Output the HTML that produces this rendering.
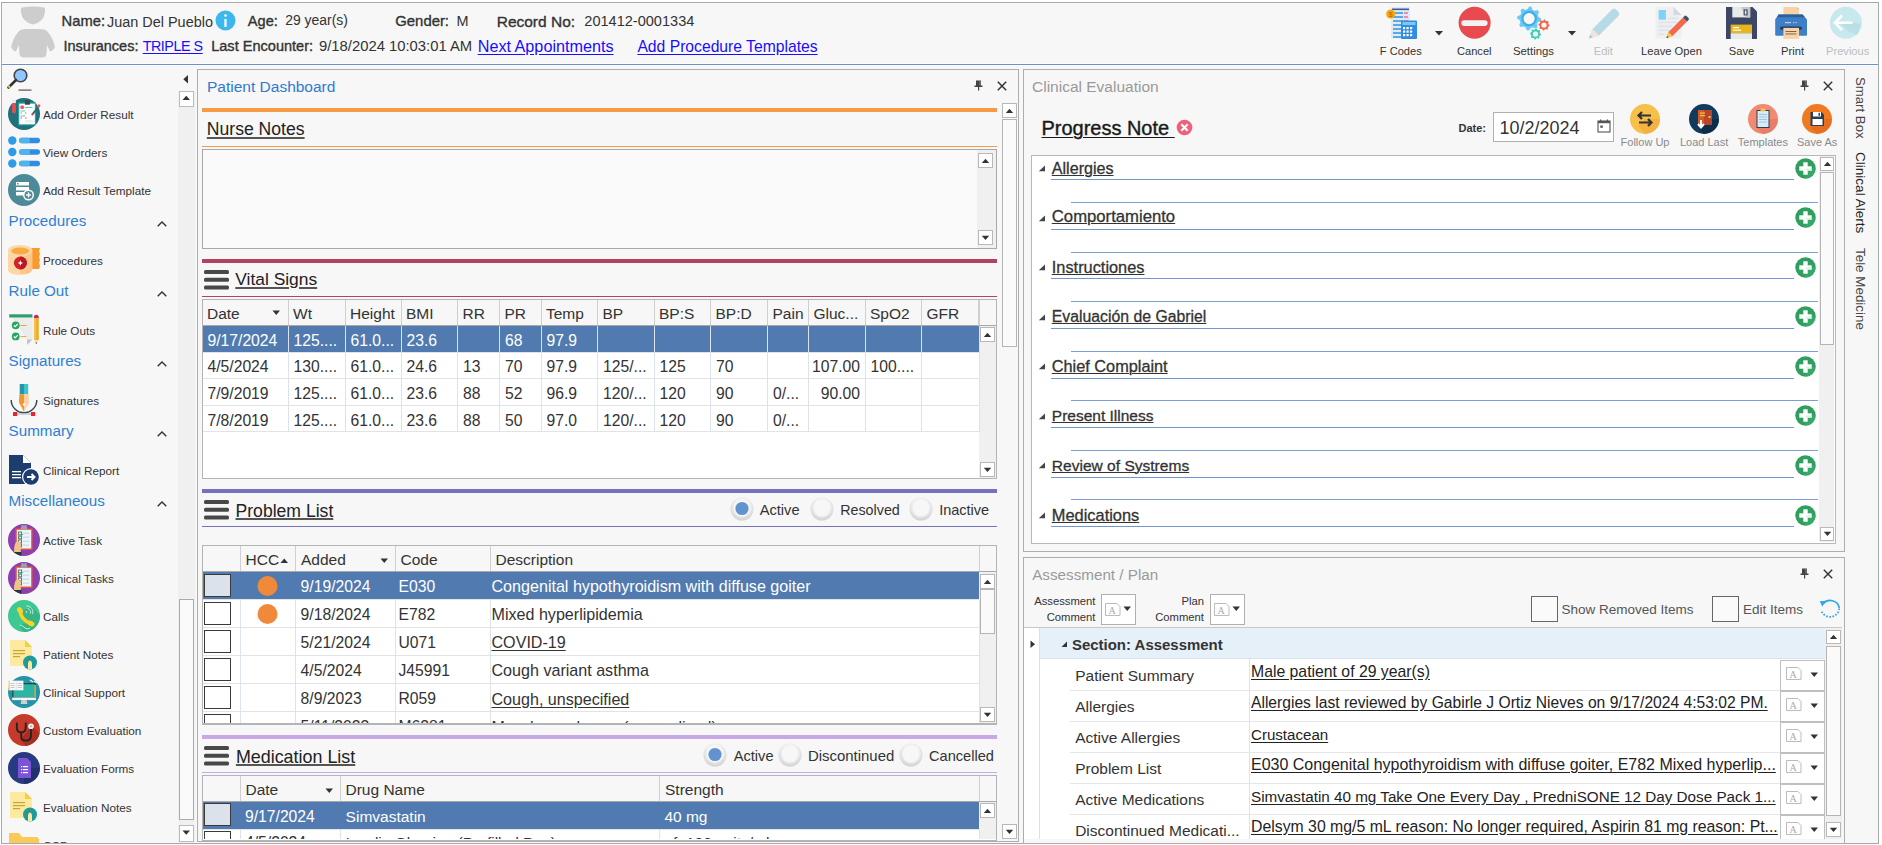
<!DOCTYPE html>
<html><head><meta charset="utf-8"><style>
html,body{margin:0;padding:0;}
body{width:1882px;height:845px;position:relative;overflow:hidden;background:#fff;font-family:"Liberation Sans",sans-serif;}
.t{position:absolute;white-space:nowrap;line-height:1;}
.a{position:absolute;box-sizing:content-box;}
svg.a{overflow:visible;}
</style></head><body>
<div class="a" style="left:1px;top:2px;width:1876px;height:840px;border:1px solid #a9a9a9;background:#f7f7f7"></div>
<div class="a" style="left:2px;top:63px;width:1876px;height:1px;background:#fdfdfd"></div>
<div class="a" style="left:2px;top:64px;width:1876px;height:1px;background:#6b93c8"></div>
<div class="a" style="left:2px;top:65px;width:1876px;height:1px;background:#fdfdfd"></div>
<svg class="a" style="left:8px;top:5px" width="50" height="54" viewBox="0 0 50 54">
<path d="M14 2.5 Q25 0.5 36 2.5 Q37.5 3 37 7 Q36 17 25 19.5 Q14 17 13 7 Q12.5 3 14 2.5Z" fill="#cdcdcd"/>
<path d="M3.2 42 Q5 33 11 26 Q13 24 18 24 L32 24 Q37 24 39 26 Q45 33 47 42 Q45 46 42 46.5 L39 40 L38.5 49 Q38 52.5 34 52.5 L16 52.5 Q12 52.5 11.5 49 L11 40 L8 46.5 Q5 46 3.2 42Z" fill="#cdcdcd"/>
</svg>
<div class="t " style="left:61.6px;top:14.32px;font-size:14.74px;color:#333;-webkit-text-stroke:0.35px #333;">Name:</div>
<div class="t " style="left:107px;top:14.57px;font-size:14.45px;color:#333;">Juan Del Pueblo</div>
<svg class="a" style="left:215px;top:10px" width="21" height="21" viewBox="0 0 21 21"><circle cx="10.5" cy="10.5" r="10" fill="#3cb8ef"/><path d="M10.5 10.5 L20.5 10.5 A10 10 0 0 1 10.5 20.5Z" fill="#33a6e0" opacity="0.0"/><rect x="9.4" y="9" width="2.2" height="8" fill="#fff"/><circle cx="10.5" cy="5.6" r="1.3" fill="#fff"/></svg>
<div class="t " style="left:247.8px;top:14.46px;font-size:14.58px;color:#333;-webkit-text-stroke:0.35px #333;">Age:</div>
<div class="t " style="left:285.2px;top:14.49px;font-size:13.95px;color:#333;">29 year(s)</div>
<div class="t " style="left:395.3px;top:14.22px;font-size:14.86px;color:#333;-webkit-text-stroke:0.35px #333;">Gender:</div>
<div class="t " style="left:456.4px;top:14.07px;font-size:14.45px;color:#333;">M</div>
<div class="t " style="left:496.7px;top:13.68px;font-size:15.5px;color:#333;-webkit-text-stroke:0.35px #333;">Record No:</div>
<div class="t " style="left:584.3px;top:13.98px;font-size:14.55px;color:#333;">201412-0001334</div>
<div class="t " style="left:63.5px;top:38.93px;font-size:14.5px;color:#333;-webkit-text-stroke:0.35px #333;">Insurances:</div>
<div class="t " style="left:142.7px;top:39.40px;font-size:14.3px;color:#1a0dff;letter-spacing:-0.45px;text-decoration:underline;text-underline-offset:2px;">TRIPLE S</div>
<div class="t " style="left:211.2px;top:38.87px;font-size:14.56px;color:#333;-webkit-text-stroke:0.35px #333;">Last Encounter:</div>
<div class="t " style="left:319px;top:38.95px;font-size:14.82px;color:#333;">9/18/2024 10:03:01 AM</div>
<div class="t " style="left:477.7px;top:38.29px;font-size:16.2px;color:#1a0dff;text-decoration:underline;text-underline-offset:2px;">Next Appointments</div>
<div class="t " style="left:637.4px;top:38.71px;font-size:15.7px;color:#1a0dff;text-decoration:underline;text-underline-offset:2px;">Add Procedure Templates</div>
<svg class="a" style="left:1385px;top:5px" width="36" height="36" viewBox="0 0 36 36">
<path d="M6 2 L25 2 L25 33.5 L6 33.5Z" fill="#dfe9f8"/>
<rect x="7" y="3.5" width="17" height="1.6" fill="#3d5a9a"/>
<g fill="#5aaae6"><rect x="8" y="7" width="10" height="2"/><rect x="8" y="11" width="10" height="2"/><rect x="8" y="15" width="10" height="2"/><rect x="8" y="19" width="8" height="2"/><rect x="8" y="23" width="8" height="2"/><rect x="8" y="27" width="8" height="2"/><rect x="8" y="31" width="8" height="2"/></g>
<g fill="#f08cb0"><rect x="19" y="7" width="4" height="2"/><rect x="19" y="11" width="4" height="2"/><rect x="19" y="15" width="4" height="2"/></g>
<rect x="16" y="15.5" width="16" height="18.5" rx="1" fill="#2f8ee0"/>
<rect x="17.5" y="17" width="13" height="3" fill="#7ec7f0"/>
<g fill="#fff"><rect x="18" y="22" width="2.2" height="2.2"/><rect x="21.5" y="22" width="2.2" height="2.2"/><rect x="25" y="22" width="2.2" height="2.2"/><rect x="18" y="25.5" width="2.2" height="2.2"/><rect x="21.5" y="25.5" width="2.2" height="2.2"/><rect x="25" y="25.5" width="2.2" height="2.2"/><rect x="18" y="29" width="2.2" height="2.2"/><rect x="21.5" y="29" width="2.2" height="2.2"/><rect x="25" y="29" width="2.2" height="2.2"/></g>
<circle cx="5.7" cy="9" r="4.6" fill="#f5a90e"/><text x="5.7" y="11.8" font-size="7" text-anchor="middle" fill="#c0580a" font-family="Liberation Sans">$</text>
</svg>
<svg class="a" style="left:1435px;top:31px" width="8" height="5.5" viewBox="0 0 8 5.5"><path d="M0 0 L8 0 L4.0 4.5Z" fill="#333"/></svg>
<div class="t" style="left:1340.8px;width:120px;text-align:center;top:45.60px;font-size:11.1px;color:#333;">F Codes</div>
<svg class="a" style="left:1458px;top:6px" width="34" height="34" viewBox="0 0 34 34"><circle cx="16.6" cy="16.8" r="16" fill="#e84a4f"/><rect x="3.3" y="14.2" width="26.3" height="5.7" rx="2.8" fill="#f2f2f2"/></svg>
<div class="t" style="left:1414.3px;width:120px;text-align:center;top:45.60px;font-size:11.1px;color:#333;">Cancel</div>
<svg class="a" style="left:1515px;top:5px" width="36" height="36" viewBox="0 0 36 36"><path d="M26.10 13.60 L25.87 15.94 L22.75 17.18 L21.88 18.80 L22.59 22.09 L20.77 23.58 L17.68 22.25 L15.93 22.78 L14.10 25.60 L11.76 25.37 L10.52 22.25 L8.90 21.38 L5.61 22.09 L4.12 20.27 L5.45 17.18 L4.92 15.43 L2.10 13.60 L2.33 11.26 L5.45 10.02 L6.32 8.40 L5.61 5.11 L7.43 3.62 L10.52 4.95 L12.27 4.42 L14.10 1.60 L16.44 1.83 L17.68 4.95 L19.30 5.82 L22.59 5.11 L24.08 6.93 L22.75 10.02 L23.28 11.77Z" fill="#6ccaf5"/><circle cx="14.1" cy="13.6" r="9.36" fill="#6ccaf5"/><circle cx="14.1" cy="13.6" r="7.76" fill="#40ace6"/><circle cx="14.1" cy="13.6" r="5.6" fill="#f7f7f7"/><path d="M34.60 20.00 L34.49 21.09 L33.04 21.67 L32.63 22.43 L32.96 23.96 L32.11 24.66 L30.67 24.04 L29.85 24.28 L29.00 25.60 L27.91 25.49 L27.33 24.04 L26.57 23.63 L25.04 23.96 L24.34 23.11 L24.96 21.67 L24.72 20.85 L23.40 20.00 L23.51 18.91 L24.96 18.33 L25.37 17.57 L25.04 16.04 L25.89 15.34 L27.33 15.96 L28.15 15.72 L29.00 14.40 L30.09 14.51 L30.67 15.96 L31.43 16.37 L32.96 16.04 L33.66 16.89 L33.04 18.33 L33.28 19.15Z" fill="#f0684e"/><circle cx="29" cy="20" r="4.367999999999999" fill="#f0684e"/><circle cx="29" cy="20" r="3.608" fill="#f0684e"/><circle cx="29" cy="20" r="2.6" fill="#f7f7f7"/><path d="M26.10 29.00 L25.99 30.09 L24.54 30.67 L24.13 31.43 L24.46 32.96 L23.61 33.66 L22.17 33.04 L21.35 33.28 L20.50 34.60 L19.41 34.49 L18.83 33.04 L18.07 32.63 L16.54 32.96 L15.84 32.11 L16.46 30.67 L16.22 29.85 L14.90 29.00 L15.01 27.91 L16.46 27.33 L16.87 26.57 L16.54 25.04 L17.39 24.34 L18.83 24.96 L19.65 24.72 L20.50 23.40 L21.59 23.51 L22.17 24.96 L22.93 25.37 L24.46 25.04 L25.16 25.89 L24.54 27.33 L24.78 28.15Z" fill="#3fcfb5"/><circle cx="20.5" cy="29" r="4.367999999999999" fill="#3fcfb5"/><circle cx="20.5" cy="29" r="3.608" fill="#3fcfb5"/><circle cx="20.5" cy="29" r="2.6" fill="#f7f7f7"/></svg>
<svg class="a" style="left:1568px;top:31px" width="8" height="5.5" viewBox="0 0 8 5.5"><path d="M0 0 L8 0 L4.0 4.5Z" fill="#333"/></svg>
<div class="t" style="left:1473.5px;width:120px;text-align:center;top:46.05px;font-size:11.4px;color:#333;">Settings</div>
<svg class="a" style="left:1585px;top:5px" width="36" height="36" viewBox="0 0 36 36">
<path d="M4 33.5 L7.5 24 L27 4.5 Q29 2.7 31 4.5 L33.5 7 Q35.2 9 33.5 11 L14 30.5Z" fill="#b6dbe6"/>
<path d="M7.5 24 L14 30.5 L4 33.5Z" fill="#f4e3dc"/>
<path d="M4 33.5 L5.3 29.8 L7.6 32.3Z" fill="#9bc9d6"/>
</svg>
<div class="t" style="left:1543.3px;width:120px;text-align:center;top:45.60px;font-size:11.1px;color:#bdbdbd;">Edit</div>
<svg class="a" style="left:1654px;top:5px" width="36" height="36" viewBox="0 0 36 36">
<path d="M1.5 2 L19.5 2 L27.5 10 L27.5 33.5 L1.5 33.5Z" fill="#efefef"/>
<path d="M19.5 2 L27.5 10 L19.5 10Z" fill="#d3d8e3"/>
<rect x="4.6" y="5" width="7.3" height="9.7" fill="#7dd3f7"/>
<g fill="#dde3ec"><rect x="14" y="12.5" width="10" height="1.6"/><rect x="4.5" y="16.5" width="19" height="1.6"/><rect x="4.5" y="20.5" width="14" height="1.6"/><rect x="4.5" y="24.5" width="12" height="1.6"/><rect x="4.5" y="28.5" width="6" height="1.6"/></g>
<path d="M12.5 33 L14.5 27 L29 12.5 L33 16.5 L18.5 31Z" fill="#f26a4b"/>
<path d="M29 12.5 L30.5 11 Q31.5 10 32.5 11 L34.5 13 Q35.5 14 34.5 15 L33 16.5Z" fill="#3e5266"/>
<path d="M14.5 27 L18.5 31 L12.5 33Z" fill="#f4c84e"/>
<path d="M12.5 33 L13.2 31 L14.5 32.4Z" fill="#333"/>
</svg>
<div class="t" style="left:1611.5px;width:120px;text-align:center;top:45.52px;font-size:11.2px;color:#333;">Leave Open</div>
<svg class="a" style="left:1725px;top:5px" width="34" height="36" viewBox="0 0 34 36">
<path d="M1 2 L27.5 2 L32 6.5 L32 34 L1 34Z" fill="#3d4664"/>
<rect x="7.3" y="2" width="17.9" height="10.4" fill="#e6eaea"/>
<path d="M16 2 L25.2 2 L25.2 12.4 L21 12.4Z" fill="#c5c9cc"/>
<rect x="18.6" y="4.4" width="4" height="6" fill="#3d4664"/><rect x="19.8" y="5.4" width="1.6" height="4" fill="#e6eaea"/>
<rect x="5.7" y="19.6" width="21.3" height="8.6" fill="#e8b61c"/>
<rect x="5.7" y="28.2" width="21.3" height="5.8" fill="#e6eaea"/>
<rect x="8" y="22" width="6" height="1.2" fill="#fff"/><rect x="8" y="24.6" width="8" height="1.2" fill="#fff"/>
</svg>
<div class="t" style="left:1681.5px;width:120px;text-align:center;top:45.52px;font-size:11.2px;color:#333;">Save</div>
<svg class="a" style="left:1774px;top:5px" width="36" height="36" viewBox="0 0 36 36">
<path d="M9.4 1.9 L23 1.9 L25 4 L25 13 L9.4 13Z" fill="#f9d3a5"/>
<path d="M23 1.9 L25 4 L23 4Z" fill="#e8b888"/>
<path d="M4.5 9.6 L28.5 9.6 L33 14.5 L33 29.8 Q33 30.8 32 30.8 L2.2 30.8 Q1.2 30.8 1.2 29.8 L1.2 14.5Z" fill="#3f7fc7"/>
<path d="M4.5 9.6 L28.5 9.6 L31 12.3 L3.2 12.3Z" fill="#2e5f98"/>
<rect x="11" y="17" width="6" height="1.2" fill="#b9d3ef"/><rect x="19" y="17" width="1.2" height="1.2" fill="#b9d3ef"/><rect x="21.5" y="17" width="1.2" height="1.2" fill="#b9d3ef"/>
<rect x="6" y="21.6" width="22" height="3.2" rx="1.6" fill="#2b3e55"/>
<rect x="9.4" y="22.9" width="15.6" height="11" fill="#f9d3a5"/>
<rect x="11.5" y="26" width="11" height="0.9" fill="#6b5a45"/><rect x="11.5" y="28.5" width="11" height="0.9" fill="#6b5a45"/>
</svg>
<div class="t" style="left:1732.5px;width:120px;text-align:center;top:45.52px;font-size:11.2px;color:#333;">Print</div>
<svg class="a" style="left:1829px;top:6px" width="34" height="34" viewBox="0 0 34 34">
<circle cx="16.9" cy="16.8" r="16" fill="#c7e8ec"/>
<path d="M11 16.8 L19 24.8 L28 29 L32 18 L26 16.8 Z" fill="#b5dde2" opacity="0.8"/>
<path d="M13 9.5 L6 16.8 L13 24 M6.5 16.8 L23.5 16.8" stroke="#fff" stroke-width="2.6" fill="none"/>
</svg>
<div class="t" style="left:1787.7px;width:120px;text-align:center;top:45.60px;font-size:11.1px;color:#bdbdbd;">Previous</div>
<div class="a" style="left:0;top:0;width:1882px;height:845px;clip-path:inset(66px 1686px 2px 2px)"><div class="a" style="left:178px;top:91px;width:17px;height:752px;background:#f0f0f0"></div>
<svg class="a" style="left:183px;top:75px" width="6" height="9" viewBox="0 0 6 9"><path d="M5 0 L5 8.5 L0.3 4.25Z" fill="#333"/></svg>
<div class="a" style="left:179px;top:91px;width:13px;height:14px;border:1px solid #bbb;background:#fff"></div>
<svg class="a" style="left:182px;top:95px" width="9" height="6" viewBox="0 0 9 6"><path d="M0.5 5 L8 5 L4.25 0.8Z" fill="#333"/></svg>
<div class="a" style="left:179px;top:599px;width:13px;height:219px;border:1px solid #aaa;background:#fafafa"></div>
<div class="a" style="left:179px;top:825px;width:13px;height:15px;border:1px solid #bbb;background:#fff"></div>
<svg class="a" style="left:182px;top:830px" width="9" height="6" viewBox="0 0 9 6"><path d="M0.5 0.5 L8 0.5 L4.25 4.7Z" fill="#333"/></svg>
<svg class="a" style="left:6px;top:67px" width="26" height="26" viewBox="0 0 26 26"><circle cx="14.5" cy="8.5" r="6.3" fill="#8ec7ff" stroke="#444" stroke-width="1.6"/>
<path d="M10 13 L2.5 20.5" stroke="#333" stroke-width="2.6" stroke-linecap="round"/><path d="M2.5 20.5 L4 19" stroke="#bcd23a" stroke-width="2.6"/>
<rect x="12.5" y="22.5" width="13" height="1.2" fill="#555"/></svg>
<svg class="a" style="left:8px;top:98px" width="32" height="32" viewBox="0 0 32 32"><circle cx="16" cy="16" r="16" fill="#22707c"/>
<rect x="10.3" y="4.6" width="17.5" height="22.7" fill="#2ab5a5"/><rect x="11.3" y="5.8" width="15.5" height="20.4" fill="#fff"/>
<rect x="16.9" y="2.2" width="5" height="4.5" fill="#444"/>
<rect x="4.1" y="1.7" width="3.8" height="3.5" fill="#e8eef0"/><rect x="4.1" y="5" width="3.8" height="10.5" rx="1.9" fill="#f04a4a"/>
<circle cx="14.2" cy="9.3" r="2" fill="#f06060"/>
<g fill="#5cc8c0"><rect x="17" y="9" width="7.5" height="1"/><rect x="12.5" y="12.5" width="4.5" height="1"/><rect x="12.5" y="17.5" width="4.5" height="1"/></g>
<g fill="#999"><rect x="12.5" y="14.5" width="1.5" height="1"/><rect x="17" y="14.5" width="1.5" height="1"/></g>
<g fill="#f05050"><rect x="12.5" y="19.5" width="1.5" height="1"/><rect x="17" y="19.5" width="1.5" height="1"/></g>
<rect x="17" y="22" width="8" height="2.5" fill="#eee"/>
<path d="M24 16.9 L31 8" stroke="#22707c" stroke-width="2"/><path d="M29.5 9.5 L31.8 6.8" stroke="#f05050" stroke-width="2.2"/><circle cx="24.3" cy="16.5" r="0.9" fill="#f05050"/></svg>
<div class="t " style="left:43px;top:109.07px;font-size:11.73px;color:#333;">Add Order Result</div>
<svg class="a" style="left:8px;top:136px" width="32" height="33" viewBox="0 0 32 33"><g fill="#2f9be8"><circle cx="4.3" cy="4.5" r="4.2"/><circle cx="4.3" cy="16" r="4.2"/><circle cx="4.3" cy="27.5" r="4.2"/></g>
<g><rect x="11" y="1.8" width="21" height="5.4" rx="2.7" fill="#2f8ee0"/><rect x="11" y="1.8" width="11" height="5.4" rx="2.7" fill="#4fb4ec"/>
<rect x="11" y="13.3" width="21" height="5.4" rx="2.7" fill="#2f8ee0"/><rect x="11" y="13.3" width="11" height="5.4" rx="2.7" fill="#4fb4ec"/>
<rect x="11" y="24.8" width="21" height="5.4" rx="2.7" fill="#2f8ee0"/><rect x="11" y="24.8" width="11" height="5.4" rx="2.7" fill="#4fb4ec"/></g></svg>
<div class="t " style="left:43px;top:147.07px;font-size:11.73px;color:#333;">View Orders</div>
<svg class="a" style="left:8px;top:174px" width="32" height="32" viewBox="0 0 32 32"><circle cx="16" cy="16" r="16" fill="#4d8a98"/>
<rect x="8" y="8" width="13" height="3.5" fill="#fff"/><rect x="8" y="13" width="13" height="3.5" fill="#fff"/><rect x="8" y="18" width="9" height="3.5" fill="#fff"/>
<rect x="9" y="9" width="1.5" height="1.5" fill="#4d8a98"/>
<circle cx="20.5" cy="21" r="5.5" fill="#fff"/><circle cx="20.5" cy="21" r="4" fill="#4d8a98"/><rect x="18" y="20.3" width="5" height="1.4" fill="#fff"/><rect x="19.8" y="18.5" width="1.4" height="5" fill="#fff"/></svg>
<div class="t " style="left:43px;top:185.07px;font-size:11.73px;color:#333;">Add Result Template</div>
<svg class="a" style="left:8px;top:244px" width="32" height="32" viewBox="0 0 32 32"><path d="M16 4 L32 4 L31 7 L32 10 L31 13 L32 16 L31 19 L32 22 L31 25 L16 25Z" fill="#f99a2e"/>
<path d="M0 6.5 L0 25 Q0 30.5 12.2 30.5 Q24.4 30.5 24.4 25 L24.4 6.5Z" fill="#fcc58c"/>
<path d="M0 6.5 L0 25 Q0 30.5 12.2 30.5 L12.2 6.5Z" fill="#fdd7a6"/>
<ellipse cx="12.2" cy="6.5" rx="12.2" ry="5.5" fill="#fdd7a6"/>
<ellipse cx="12.2" cy="7" rx="9" ry="3.5" fill="#f9aa48"/>
<circle cx="12.4" cy="19" r="6.5" fill="#d6202a"/><path d="M12.4 12.5 A6.5 6.5 0 0 1 12.4 25.5Z" fill="#b81820"/>
<path d="M12.4 16.3 L13.2 18.2 L15.1 19 L13.2 19.8 L12.4 21.7 L11.6 19.8 L9.7 19 L11.6 18.2Z" fill="#fff"/></svg>
<div class="t " style="left:43px;top:254.67px;font-size:11.73px;color:#333;">Procedures</div>
<svg class="a" style="left:8px;top:314px" width="32" height="32" viewBox="0 0 32 32"><path d="M1.2 0.3 L24.4 0.3 L24.4 25.5 L19 30.9 L1.2 30.9Z" fill="#f6f6f6"/>
<path d="M4 3.5 L24.4 3.5 L24.4 25.5 L19 30.9 L19 25Z" fill="#ececec"/>
<rect x="1.2" y="0.3" width="23.2" height="3.2" fill="#2f9f6a"/>
<path d="M19 30.9 L24.4 25.5 L19 25.5Z" fill="#c4c4c4"/>
<circle cx="7.7" cy="11.3" r="3.9" fill="#27a660"/><circle cx="7.7" cy="22.4" r="3.9" fill="#27a660"/>
<path d="M5.8 11.3 L7.2 12.7 L9.8 10 M5.8 22.4 L7.2 23.8 L9.8 21.1" stroke="#fff" stroke-width="1.2" fill="none"/>
<rect x="12.5" y="11" width="6" height="1" fill="#f0a040"/><rect x="12.5" y="22.1" width="6" height="1" fill="#f0a040"/>
<rect x="25.9" y="3" width="4.7" height="23" fill="#f2c24a"/><rect x="28.2" y="3" width="2.4" height="23" fill="#e8ae30"/><path d="M25.9 3 Q25.9 0.8 28.25 0.8 Q30.6 0.8 30.6 3Z" fill="#d02070"/><rect x="25.9" y="2.5" width="4.7" height="1.5" fill="#d02070"/><path d="M25.9 26 L30.6 26 L28.25 30.2Z" fill="#f8e0b0"/><path d="M27.5 28.6 L29 28.6 L28.25 30.2Z" fill="#444"/></svg>
<div class="t " style="left:43px;top:324.57px;font-size:11.73px;color:#333;">Rule Outs</div>
<svg class="a" style="left:8px;top:384px" width="32" height="32" viewBox="0 0 32 32"><path d="M3.2 16 A12.8 12.8 0 0 0 28.8 16" stroke="#34464c" stroke-width="1.4" fill="none"/>
<rect x="9" y="29.3" width="14" height="1.4" fill="#b8c8cc"/>
<rect x="5" y="28" width="4.2" height="4" fill="#e8242c"/><rect x="23" y="28" width="4.2" height="4" fill="#e8242c"/>
<rect x="11.7" y="0" width="4.3" height="10.2" fill="#2596a8"/><rect x="16" y="0" width="4.2" height="10.2" fill="#3cc4d4"/>
<path d="M11.3 10.2 L16 10.2 L16 27.8 L11 18.5Z" fill="#f3962e"/><path d="M16 10.2 L20.7 10.2 L21 18.5 L16 27.8Z" fill="#fcd1a6"/>
<circle cx="16" cy="20.5" r="1.3" fill="#fff"/></svg>
<div class="t " style="left:43px;top:395.07px;font-size:11.73px;color:#333;">Signatures</div>
<svg class="a" style="left:8px;top:454px" width="32" height="32" viewBox="0 0 32 32"><path d="M1 1 L15 1 L23 9 L23 30 L1 30Z" fill="#1d3d6e"/>
<path d="M15 1 L23 9 L15 9Z" fill="#fff"/>
<g fill="#fff"><rect x="4" y="17" width="9" height="1.3"/><rect x="4" y="20" width="9" height="1.3"/><rect x="4" y="23" width="9" height="1.3"/></g>
<circle cx="23" cy="23" r="9" fill="#fff"/><circle cx="23" cy="23" r="7.8" fill="#1d3d6e"/>
<path d="M19 23 L26 23 M23.5 20 L26.5 23 L23.5 26" stroke="#fff" stroke-width="2" fill="none"/></svg>
<div class="t " style="left:43px;top:464.67px;font-size:11.73px;color:#333;">Clinical Report</div>
<svg class="a" style="left:8px;top:524px" width="32" height="32" viewBox="0 0 32 32"><clipPath id="clclip8e3fae"><circle cx="16" cy="16" r="16"/></clipPath><circle cx="16" cy="16" r="16" fill="#8e3fae"/>
<rect x="7.4" y="4.5" width="17.1" height="21.4" fill="#e8553a"/><rect x="8.8" y="5.8" width="14.4" height="18.7" fill="#eaf5f8"/>
<path d="M13.5 1.2 L18.5 1.2 L19.5 5.5 L12.5 5.5Z" fill="#9aa3a8"/>
<g fill="none" stroke="#5a6670" stroke-width="0.9"><rect x="10.6" y="8" width="3" height="2.8"/><rect x="10.6" y="12" width="3" height="2.8"/><rect x="10.6" y="16" width="3" height="2.8"/><rect x="10.6" y="20" width="3" height="2.8"/></g>
<path d="M10 11.5 L11.6 13 L15 10.2" stroke="#3cc070" stroke-width="1" fill="none"/>
<g fill="#ccd"><rect x="15" y="8.7" width="6" height="1"/><rect x="15" y="12.7" width="6" height="1"/><rect x="15" y="16.7" width="6" height="1"/><rect x="15" y="20.7" width="6" height="1"/></g>
<g clip-path="url(#clclip8e3fae)"><path d="M7 20 Q8 17 10 17.5 L12.5 18 L12.8 28.3 L6.2 28.3 Q5.5 24 7 20Z" fill="#eec487"/><rect x="5.5" y="28" width="8" height="5" fill="#243544"/></g></svg>
<div class="t " style="left:43px;top:534.87px;font-size:11.73px;color:#333;">Active Task</div>
<svg class="a" style="left:8px;top:562px" width="32" height="32" viewBox="0 0 32 32"><clipPath id="clclip8e3fae"><circle cx="16" cy="16" r="16"/></clipPath><circle cx="16" cy="16" r="16" fill="#8e3fae"/>
<rect x="7.4" y="4.5" width="17.1" height="21.4" fill="#e8553a"/><rect x="8.8" y="5.8" width="14.4" height="18.7" fill="#eaf5f8"/>
<path d="M13.5 1.2 L18.5 1.2 L19.5 5.5 L12.5 5.5Z" fill="#9aa3a8"/>
<g fill="none" stroke="#5a6670" stroke-width="0.9"><rect x="10.6" y="8" width="3" height="2.8"/><rect x="10.6" y="12" width="3" height="2.8"/><rect x="10.6" y="16" width="3" height="2.8"/><rect x="10.6" y="20" width="3" height="2.8"/></g>
<path d="M10 11.5 L11.6 13 L15 10.2" stroke="#3cc070" stroke-width="1" fill="none"/>
<g fill="#ccd"><rect x="15" y="8.7" width="6" height="1"/><rect x="15" y="12.7" width="6" height="1"/><rect x="15" y="16.7" width="6" height="1"/><rect x="15" y="20.7" width="6" height="1"/></g>
<g clip-path="url(#clclip8e3fae)"><path d="M7 20 Q8 17 10 17.5 L12.5 18 L12.8 28.3 L6.2 28.3 Q5.5 24 7 20Z" fill="#eec487"/><rect x="5.5" y="28" width="8" height="5" fill="#243544"/></g></svg>
<div class="t " style="left:43px;top:572.97px;font-size:11.73px;color:#333;">Clinical Tasks</div>
<svg class="a" style="left:8px;top:600px" width="32" height="32" viewBox="0 0 32 32"><clipPath id="clcalls"><circle cx="16" cy="16" r="16"/></clipPath><circle cx="16" cy="16" r="16" fill="#3ec992"/><g clip-path="url(#clcalls)" fill="#37b585"><path d="M12 11 L24 7 L40 23 L28 36Z"/><path d="M11 25 L22 22 L34 34 L20 38Z"/></g>
<path d="M12.2 10.8 Q12.5 19.5 22.6 23.5" stroke="#fdd126" stroke-width="3.6" fill="none"/>
<ellipse cx="12" cy="10.5" rx="2.6" ry="3.6" transform="rotate(-30 12 10.5)" fill="#fdd126"/>
<ellipse cx="23" cy="23.5" rx="3.6" ry="2.6" transform="rotate(30 23 23.5)" fill="#fdd126"/>
<path d="M18.5 6 A6 6 0 0 1 24.5 14 M19.5 8.5 A4 4 0 0 1 22.5 13.5 M18 11 L19 13" stroke="#e8f8f0" stroke-width="0.8" fill="none"/>
<path d="M11.5 25 Q14 25 17 28 Q20 30 22 28" stroke="#e8f8f0" stroke-width="0.8" fill="none"/></svg>
<div class="t " style="left:43px;top:611.07px;font-size:11.73px;color:#333;">Calls</div>
<svg class="a" style="left:8px;top:638px" width="32" height="32" viewBox="0 0 32 32"><path d="M2 2 L17 2 L24 9 L24 28 L2 28Z" fill="#fbeaa0"/><path d="M17 2 L24 9 L17 9Z" fill="#f5d03a"/>
<g fill="#c9a530"><rect x="5" y="12" width="12" height="1.2"/><rect x="5" y="15" width="12" height="1.2"/><rect x="5" y="18" width="7" height="1.2"/></g>
<circle cx="22" cy="24.5" r="7" fill="#1f9a9a"/><path d="M20 25 L22 21 L24 25 L24 31 L20 31Z" fill="#fbeaa0"/><path d="M21.2 22.5 L22 21 L22.8 22.5Z" fill="#222"/></svg>
<div class="t " style="left:43px;top:649.17px;font-size:11.73px;color:#333;">Patient Notes</div>
<svg class="a" style="left:8px;top:676px" width="32" height="32" viewBox="0 0 32 32"><circle cx="16" cy="16" r="16" fill="#2594a6"/>
<rect x="4.2" y="7" width="23.8" height="15" fill="#2c4650"/><rect x="5.5" y="8.3" width="21.2" height="13" fill="#2ab5a5"/>
<rect x="4.2" y="21.5" width="23.8" height="2.6" fill="#f4f4f4"/>
<path d="M12.5 28 L13.5 24 L18.5 24 L19.5 28Z" fill="#d0d0d0"/>
<rect x="0.6" y="4.7" width="14.8" height="9.6" fill="#fafafa"/><rect x="0.6" y="4.7" width="1" height="9.6" fill="#f0c040"/><rect x="7.8" y="4.7" width="0.6" height="9.6" fill="#ccc"/>
<g fill="#bbb"><rect x="2.5" y="7" width="4" height="0.8"/><rect x="2.5" y="9" width="4" height="0.8"/><rect x="2.5" y="11" width="4" height="0.8"/><rect x="9.5" y="7" width="4.5" height="0.8"/><rect x="9.5" y="9" width="4.5" height="0.8"/><rect x="9.5" y="11" width="4.5" height="0.8"/></g>
<rect x="26.5" y="9" width="1.3" height="12" fill="#f0c040"/>
<path d="M22 4 L25 6 M26 5 L29 7" stroke="#fff" stroke-width="1.2"/></svg>
<div class="t " style="left:43px;top:687.27px;font-size:11.73px;color:#333;">Clinical Support</div>
<svg class="a" style="left:8px;top:714px" width="32" height="32" viewBox="0 0 32 32"><clipPath id="clcust"><circle cx="16" cy="16" r="16"/></clipPath><circle cx="16" cy="16" r="16" fill="#c53a2a"/><g clip-path="url(#clcust)"><path d="M24 12 L40 28 L26 40 L12 26Z" fill="#a82e22"/></g>
<path d="M8.8 8.5 L8.8 13.5 Q8.8 18.4 13.2 18.4 Q17.7 18.4 17.7 13.5 L17.7 8.5" stroke="#222" stroke-width="1.8" fill="none"/>
<path d="M13.2 18.4 L13.2 22.5 Q13.2 26.6 18 26.6 Q23 26.6 23 21.5 L23 14" stroke="#222" stroke-width="1.8" fill="none"/>
<circle cx="23" cy="12.3" r="2.8" fill="#f4f4f4"/><circle cx="23" cy="12.3" r="1.3" fill="#bbb"/></svg>
<div class="t " style="left:43px;top:725.37px;font-size:11.73px;color:#333;">Custom Evaluation</div>
<svg class="a" style="left:8px;top:752px" width="32" height="32" viewBox="0 0 32 32"><circle cx="16" cy="16" r="16" fill="#283a80"/><path d="M16 16 L32 16 A16 16 0 0 1 16 32Z" fill="#1e2c60" opacity="0.6"/>
<path d="M10 6 L19 6 L23 10 L23 26 L10 26Z" fill="#7b55d8"/><g fill="#fff"><rect x="13" y="14" width="1.2" height="1.2"/><rect x="15" y="14" width="5" height="1.2"/><rect x="13" y="17" width="1.2" height="1.2"/><rect x="15" y="17" width="5" height="1.2"/><rect x="13" y="20" width="1.2" height="1.2"/><rect x="15" y="20" width="5" height="1.2"/></g></svg>
<div class="t " style="left:43px;top:763.47px;font-size:11.73px;color:#333;">Evaluation Forms</div>
<svg class="a" style="left:8px;top:790px" width="32" height="32" viewBox="0 0 32 32"><path d="M2 2 L17 2 L24 9 L24 28 L2 28Z" fill="#fbeaa0"/><path d="M17 2 L24 9 L17 9Z" fill="#f5d03a"/>
<g fill="#c9a530"><rect x="5" y="12" width="12" height="1.2"/><rect x="5" y="15" width="12" height="1.2"/><rect x="5" y="18" width="7" height="1.2"/></g>
<circle cx="22" cy="24.5" r="7" fill="#1f9a9a"/><path d="M20 25 L22 21 L24 25 L24 31 L20 31Z" fill="#fbeaa0"/><path d="M21.2 22.5 L22 21 L22.8 22.5Z" fill="#222"/></svg>
<div class="t " style="left:43px;top:801.57px;font-size:11.73px;color:#333;">Evaluation Notes</div>
<svg class="a" style="left:8px;top:829px" width="32" height="32" viewBox="0 0 32 32"><path d="M1 4 L11 4 L14 8 L29 8 L31 10 L31 32 L1 32Z" fill="#f9c95a"/><circle cx="16" cy="22" r="5" fill="#e8eef4"/><circle cx="16" cy="20.5" r="2" fill="#456"/></svg>
<div class="t " style="left:43px;top:839.67px;font-size:11.73px;color:#333;">CCD</div>
<div class="t " style="left:8.6px;top:213.33px;font-size:15.2px;color:#2f7fd0;">Procedures</div>
<svg class="a" style="left:157px;top:221px" width="10" height="6" viewBox="0 0 10 6"><path d="M0.7 5.3 L5 1 L9.3 5.3" stroke="#333" stroke-width="1.4" fill="none"/></svg>
<div class="t " style="left:8.6px;top:283.33px;font-size:15.2px;color:#2f7fd0;">Rule Out</div>
<svg class="a" style="left:157px;top:291px" width="10" height="6" viewBox="0 0 10 6"><path d="M0.7 5.3 L5 1 L9.3 5.3" stroke="#333" stroke-width="1.4" fill="none"/></svg>
<div class="t " style="left:8.6px;top:353.33px;font-size:15.2px;color:#2f7fd0;">Signatures</div>
<svg class="a" style="left:157px;top:361px" width="10" height="6" viewBox="0 0 10 6"><path d="M0.7 5.3 L5 1 L9.3 5.3" stroke="#333" stroke-width="1.4" fill="none"/></svg>
<div class="t " style="left:8.6px;top:423.33px;font-size:15.2px;color:#2f7fd0;">Summary</div>
<svg class="a" style="left:157px;top:431px" width="10" height="6" viewBox="0 0 10 6"><path d="M0.7 5.3 L5 1 L9.3 5.3" stroke="#333" stroke-width="1.4" fill="none"/></svg>
<div class="t " style="left:8.6px;top:493.33px;font-size:15.2px;color:#2f7fd0;">Miscellaneous</div>
<svg class="a" style="left:157px;top:501px" width="10" height="6" viewBox="0 0 10 6"><path d="M0.7 5.3 L5 1 L9.3 5.3" stroke="#333" stroke-width="1.4" fill="none"/></svg>
</div>
<div class="a" style="left:197px;top:69px;width:820px;height:771px;border:1px solid #adadad;background:#f7f7f7"></div>
<div class="a" style="left:0;top:0;width:1882px;height:845px;clip-path:inset(69px 864px 2px 197px)"><div class="t " style="left:207px;top:78.98px;font-size:15.5px;color:#2e7bcf;">Patient Dashboard</div>
<svg class="a" style="left:974px;top:80px" width="9" height="11" viewBox="0 0 9 11"><rect x="2" y="0.5" width="5" height="5.5" fill="#444"/><rect x="0.5" y="5.5" width="8" height="1.5" fill="#444"/><rect x="4" y="7" width="1.2" height="3.5" fill="#444"/><rect x="5.5" y="1" width="1" height="4.5" fill="#888"/></svg>
<svg class="a" style="left:997px;top:81px" width="10" height="10" viewBox="0 0 10 10"><path d="M0.8 0.8 L9.2 9.2 M9.2 0.8 L0.8 9.2" stroke="#333" stroke-width="1.5"/></svg>
<div class="a" style="left:1002px;top:103px;width:13px;height:13px;border:1px solid #b8b8b8;background:#fff"></div>
<svg class="a" style="left:1005.0px;top:107.5px" width="9" height="6" viewBox="0 0 9 6"><path d="M0.8 5 L8.2 5 L4.5 0.8Z" fill="#333"/></svg>
<div class="a" style="left:1002px;top:119px;width:13px;height:226px;border:1px solid #b5b5b5;background:#fafafa"></div>
<div class="a" style="left:1002px;top:824px;width:13px;height:13px;border:1px solid #b8b8b8;background:#fff"></div>
<svg class="a" style="left:1005.0px;top:828.5px" width="9" height="6" viewBox="0 0 9 6"><path d="M0.8 0.8 L8.2 0.8 L4.5 5Z" fill="#333"/></svg>
<div class="a" style="left:202px;top:108px;width:795px;height:4px;background:#f59a45"></div>
<div class="t " style="left:206.8px;top:120.70px;font-size:17.6px;color:#222;text-decoration:underline;text-decoration-color:#555;text-decoration-thickness:1.6px;text-underline-offset:2px;">Nurse Notes</div>
<div class="a" style="left:202px;top:146px;width:795px;height:1px;background:#f59a45"></div>
<div class="a" style="left:202px;top:149px;width:793px;height:98px;border:1px solid #a8a8a8;background:#fafafa"></div>
<div class="a" style="left:977px;top:150px;width:19px;height:98px;background:#f0f0f0"></div>
<div class="a" style="left:978px;top:153px;width:13px;height:13px;border:1px solid #b8b8b8;background:#fff"></div>
<svg class="a" style="left:981.0px;top:157.5px" width="9" height="6" viewBox="0 0 9 6"><path d="M0.8 5 L8.2 5 L4.5 0.8Z" fill="#333"/></svg>
<div class="a" style="left:978px;top:230px;width:13px;height:13px;border:1px solid #b8b8b8;background:#fff"></div>
<svg class="a" style="left:981.0px;top:234.5px" width="9" height="6" viewBox="0 0 9 6"><path d="M0.8 0.8 L8.2 0.8 L4.5 5Z" fill="#333"/></svg>
<div class="a" style="left:202px;top:259px;width:795px;height:4px;background:#b2435e"></div>
<svg class="a" style="left:204px;top:270px" width="26" height="22" viewBox="0 0 26 22"><g fill="#484848"><rect x="0" y="0" width="25" height="4" rx="1.5"/><rect x="0" y="7.8" width="25" height="4" rx="1.5"/><rect x="0" y="15.6" width="25" height="4" rx="1.5"/></g></svg>
<div class="t " style="left:235.3px;top:271.07px;font-size:17.4px;color:#222;text-decoration:underline;text-decoration-color:#555;text-decoration-thickness:1.6px;text-underline-offset:2px;">Vital Signs</div>
<div class="a" style="left:202px;top:296px;width:795px;height:1px;background:#b2435e"></div>
<div class="a" style="left:202px;top:299px;width:793px;height:178px;border:1px solid #b4b4b4;background:#fff"></div>
<div class="a" style="left:203px;top:300px;width:793px;height:25px;background:#f7f7f7"></div>
<div class="a" style="left:203px;top:325px;width:793px;height:1px;background:#a8a8a8"></div>
<div class="a" style="left:979px;top:326px;width:17px;height:152px;background:#f0f0f0"></div>
<div class="a" style="left:203px;top:326px;width:775.5px;height:25.5px;background:#517bb0"></div>
<div class="a" style="left:203px;top:352px;width:775.5px;height:1px;background:#e3e3e3"></div>
<div class="a" style="left:203px;top:378px;width:775.5px;height:1px;background:#e3e3e3"></div>
<div class="a" style="left:203px;top:405px;width:775.5px;height:1px;background:#e3e3e3"></div>
<div class="a" style="left:203px;top:431px;width:775.5px;height:1px;background:#e3e3e3"></div>
<div class="a" style="left:288px;top:300px;width:1px;height:25px;background:#cfcfcf"></div>
<div class="a" style="left:288px;top:326px;width:1px;height:106px;background:#dde3ee"></div>
<div class="a" style="left:345px;top:300px;width:1px;height:25px;background:#cfcfcf"></div>
<div class="a" style="left:345px;top:326px;width:1px;height:106px;background:#dde3ee"></div>
<div class="a" style="left:401px;top:300px;width:1px;height:25px;background:#cfcfcf"></div>
<div class="a" style="left:401px;top:326px;width:1px;height:106px;background:#dde3ee"></div>
<div class="a" style="left:457px;top:300px;width:1px;height:25px;background:#cfcfcf"></div>
<div class="a" style="left:457px;top:326px;width:1px;height:106px;background:#dde3ee"></div>
<div class="a" style="left:499px;top:300px;width:1px;height:25px;background:#cfcfcf"></div>
<div class="a" style="left:499px;top:326px;width:1px;height:106px;background:#dde3ee"></div>
<div class="a" style="left:541px;top:300px;width:1px;height:25px;background:#cfcfcf"></div>
<div class="a" style="left:541px;top:326px;width:1px;height:106px;background:#dde3ee"></div>
<div class="a" style="left:597px;top:300px;width:1px;height:25px;background:#cfcfcf"></div>
<div class="a" style="left:597px;top:326px;width:1px;height:106px;background:#dde3ee"></div>
<div class="a" style="left:654px;top:300px;width:1px;height:25px;background:#cfcfcf"></div>
<div class="a" style="left:654px;top:326px;width:1px;height:106px;background:#dde3ee"></div>
<div class="a" style="left:710px;top:300px;width:1px;height:25px;background:#cfcfcf"></div>
<div class="a" style="left:710px;top:326px;width:1px;height:106px;background:#dde3ee"></div>
<div class="a" style="left:767px;top:300px;width:1px;height:25px;background:#cfcfcf"></div>
<div class="a" style="left:767px;top:326px;width:1px;height:106px;background:#dde3ee"></div>
<div class="a" style="left:808px;top:300px;width:1px;height:25px;background:#cfcfcf"></div>
<div class="a" style="left:808px;top:326px;width:1px;height:106px;background:#dde3ee"></div>
<div class="a" style="left:865px;top:300px;width:1px;height:25px;background:#cfcfcf"></div>
<div class="a" style="left:865px;top:326px;width:1px;height:106px;background:#dde3ee"></div>
<div class="a" style="left:921px;top:300px;width:1px;height:25px;background:#cfcfcf"></div>
<div class="a" style="left:921px;top:326px;width:1px;height:106px;background:#dde3ee"></div>
<div class="a" style="left:979px;top:300px;width:1px;height:25px;background:#cfcfcf"></div>
<div class="a" style="left:979px;top:326px;width:1px;height:106px;background:#dde3ee"></div>
<div class="a" style="left:978px;top:300px;width:1px;height:26px;background:#cfcfcf"></div>
<div class="t " style="left:207px;top:305.58px;font-size:15.5px;color:#333;">Date</div>
<div class="t " style="left:293px;top:305.58px;font-size:15.5px;color:#333;">Wt</div>
<div class="t " style="left:350px;top:305.58px;font-size:15.5px;color:#333;">Height</div>
<div class="t " style="left:406px;top:305.58px;font-size:15.5px;color:#333;">BMI</div>
<div class="t " style="left:462.5px;top:305.58px;font-size:15.5px;color:#333;">RR</div>
<div class="t " style="left:504.5px;top:305.58px;font-size:15.5px;color:#333;">PR</div>
<div class="t " style="left:546px;top:305.58px;font-size:15.5px;color:#333;">Temp</div>
<div class="t " style="left:602.5px;top:305.58px;font-size:15.5px;color:#333;">BP</div>
<div class="t " style="left:659px;top:305.58px;font-size:15.5px;color:#333;">BP:S</div>
<div class="t " style="left:715.5px;top:305.58px;font-size:15.5px;color:#333;">BP:D</div>
<div class="t " style="left:772.5px;top:305.58px;font-size:15.5px;color:#333;">Pain</div>
<div class="t " style="left:813.5px;top:305.58px;font-size:15.5px;color:#333;">Gluc...</div>
<div class="t " style="left:870px;top:305.58px;font-size:15.5px;color:#333;">SpO2</div>
<div class="t " style="left:926.5px;top:305.58px;font-size:15.5px;color:#333;">GFR</div>
<svg class="a" style="left:272px;top:310px" width="9" height="6" viewBox="0 0 9 6"><path d="M0.5 0.5 L8 0.5 L4.25 5Z" fill="#333"/></svg>
<div class="t " style="left:207.5px;top:332.71px;font-size:15.7px;color:#fff;">9/17/2024</div>
<div class="t " style="left:293.5px;top:332.71px;font-size:15.7px;color:#fff;">125....</div>
<div class="t " style="left:350.5px;top:332.71px;font-size:15.7px;color:#fff;">61.0...</div>
<div class="t " style="left:406.5px;top:332.71px;font-size:15.7px;color:#fff;">23.6</div>
<div class="t " style="left:505.0px;top:332.71px;font-size:15.7px;color:#fff;">68</div>
<div class="t " style="left:546.5px;top:332.71px;font-size:15.7px;color:#fff;">97.9</div>
<div class="t " style="left:207.5px;top:359.41px;font-size:15.7px;color:#333;">4/5/2024</div>
<div class="t " style="left:293.5px;top:359.41px;font-size:15.7px;color:#333;">130....</div>
<div class="t " style="left:350.5px;top:359.41px;font-size:15.7px;color:#333;">61.0...</div>
<div class="t " style="left:406.5px;top:359.41px;font-size:15.7px;color:#333;">24.6</div>
<div class="t " style="left:463.0px;top:359.41px;font-size:15.7px;color:#333;">13</div>
<div class="t " style="left:505.0px;top:359.41px;font-size:15.7px;color:#333;">70</div>
<div class="t " style="left:546.5px;top:359.41px;font-size:15.7px;color:#333;">97.9</div>
<div class="t " style="left:603.0px;top:359.41px;font-size:15.7px;color:#333;">125/...</div>
<div class="t " style="left:659.5px;top:359.41px;font-size:15.7px;color:#333;">125</div>
<div class="t " style="left:716.0px;top:359.41px;font-size:15.7px;color:#333;">70</div>
<div class="t" style="left:560.0px;width:300px;text-align:right;top:359.41px;font-size:15.7px;color:#333;">107.00</div>
<div class="t " style="left:870.5px;top:359.41px;font-size:15.7px;color:#333;">100....</div>
<div class="t " style="left:207.5px;top:386.21px;font-size:15.7px;color:#333;">7/9/2019</div>
<div class="t " style="left:293.5px;top:386.21px;font-size:15.7px;color:#333;">125....</div>
<div class="t " style="left:350.5px;top:386.21px;font-size:15.7px;color:#333;">61.0...</div>
<div class="t " style="left:406.5px;top:386.21px;font-size:15.7px;color:#333;">23.6</div>
<div class="t " style="left:463.0px;top:386.21px;font-size:15.7px;color:#333;">88</div>
<div class="t " style="left:505.0px;top:386.21px;font-size:15.7px;color:#333;">52</div>
<div class="t " style="left:546.5px;top:386.21px;font-size:15.7px;color:#333;">96.9</div>
<div class="t " style="left:603.0px;top:386.21px;font-size:15.7px;color:#333;">120/...</div>
<div class="t " style="left:659.5px;top:386.21px;font-size:15.7px;color:#333;">120</div>
<div class="t " style="left:716.0px;top:386.21px;font-size:15.7px;color:#333;">90</div>
<div class="t " style="left:773.0px;top:386.21px;font-size:15.7px;color:#333;">0/...</div>
<div class="t" style="left:560.0px;width:300px;text-align:right;top:386.21px;font-size:15.7px;color:#333;">90.00</div>
<div class="t " style="left:207.5px;top:412.71px;font-size:15.7px;color:#333;">7/8/2019</div>
<div class="t " style="left:293.5px;top:412.71px;font-size:15.7px;color:#333;">125....</div>
<div class="t " style="left:350.5px;top:412.71px;font-size:15.7px;color:#333;">61.0...</div>
<div class="t " style="left:406.5px;top:412.71px;font-size:15.7px;color:#333;">23.6</div>
<div class="t " style="left:463.0px;top:412.71px;font-size:15.7px;color:#333;">88</div>
<div class="t " style="left:505.0px;top:412.71px;font-size:15.7px;color:#333;">50</div>
<div class="t " style="left:546.5px;top:412.71px;font-size:15.7px;color:#333;">97.0</div>
<div class="t " style="left:603.0px;top:412.71px;font-size:15.7px;color:#333;">120/...</div>
<div class="t " style="left:659.5px;top:412.71px;font-size:15.7px;color:#333;">120</div>
<div class="t " style="left:716.0px;top:412.71px;font-size:15.7px;color:#333;">90</div>
<div class="t " style="left:773.0px;top:412.71px;font-size:15.7px;color:#333;">0/...</div>
<div class="a" style="left:980px;top:327px;width:13px;height:13px;border:1px solid #b8b8b8;background:#fff"></div>
<svg class="a" style="left:983.0px;top:331.5px" width="9" height="6" viewBox="0 0 9 6"><path d="M0.8 5 L8.2 5 L4.5 0.8Z" fill="#333"/></svg>
<div class="a" style="left:980px;top:462px;width:13px;height:13px;border:1px solid #b8b8b8;background:#fff"></div>
<svg class="a" style="left:983.0px;top:466.5px" width="9" height="6" viewBox="0 0 9 6"><path d="M0.8 0.8 L8.2 0.8 L4.5 5Z" fill="#333"/></svg>
<div class="a" style="left:202px;top:489px;width:795px;height:4px;background:#7472b8"></div>
<svg class="a" style="left:204px;top:500px" width="26" height="22" viewBox="0 0 26 22"><g fill="#484848"><rect x="0" y="0" width="25" height="4" rx="1.5"/><rect x="0" y="7.8" width="25" height="4" rx="1.5"/><rect x="0" y="15.6" width="25" height="4" rx="1.5"/></g></svg>
<div class="t " style="left:235.5px;top:502.90px;font-size:17.6px;color:#222;text-decoration:underline;text-decoration-color:#555;text-decoration-thickness:1.6px;text-underline-offset:1px;">Problem List</div>
<div class="a" style="left:202px;top:526px;width:795px;height:1px;background:#7472b8"></div>
<svg class="a" style="left:730px;top:497px" width="24" height="24" viewBox="0 0 24 24"><defs><radialGradient id="rg742509" cx="50%" cy="40%" r="60%"><stop offset="0.55" stop-color="#f4f4f4"/><stop offset="1" stop-color="#d0d0d0"/></radialGradient></defs><circle cx="12" cy="12" r="11.5" fill="url(#rg742509)"/><circle cx="12" cy="11.5" r="8" fill="#f7f7f7"/><circle cx="12" cy="11.5" r="6.6" fill="#6393cf"/></svg>
<div class="t " style="left:759.7px;top:503.10px;font-size:14.65px;color:#333;">Active</div>
<svg class="a" style="left:810px;top:497px" width="24" height="24" viewBox="0 0 24 24"><defs><radialGradient id="rg822509" cx="50%" cy="40%" r="60%"><stop offset="0.55" stop-color="#f4f4f4"/><stop offset="1" stop-color="#d0d0d0"/></radialGradient></defs><circle cx="12" cy="12" r="11.5" fill="url(#rg822509)"/><circle cx="12" cy="11.5" r="8" fill="#f7f7f7"/></svg>
<div class="t " style="left:840.2px;top:503.40px;font-size:14.3px;color:#333;">Resolved</div>
<svg class="a" style="left:909px;top:497px" width="24" height="24" viewBox="0 0 24 24"><defs><radialGradient id="rg921509" cx="50%" cy="40%" r="60%"><stop offset="0.55" stop-color="#f4f4f4"/><stop offset="1" stop-color="#d0d0d0"/></radialGradient></defs><circle cx="12" cy="12" r="11.5" fill="url(#rg921509)"/><circle cx="12" cy="11.5" r="8" fill="#f7f7f7"/></svg>
<div class="t " style="left:939.2px;top:503.23px;font-size:14.5px;color:#333;">Inactive</div>
<div class="a" style="left:202px;top:545px;width:793px;height:178px;border:1px solid #b4b4b4;background:#fff"></div>
<div class="a" style="left:0;top:0;width:1882px;height:845px;clip-path:inset(545px 885px 121px 202px)"><div class="a" style="left:203px;top:546px;width:793px;height:25px;background:#f7f7f7"></div>
<div class="a" style="left:203px;top:571px;width:793px;height:1px;background:#a8a8a8"></div>
<div class="a" style="left:979px;top:572px;width:17px;height:152px;background:#f0f0f0"></div>
<div class="a" style="left:203px;top:572px;width:775.5px;height:28px;background:#517bb0"></div>
<div class="a" style="left:203px;top:599px;width:775.5px;height:1px;background:#e3e3e3"></div>
<div class="a" style="left:203px;top:627px;width:775.5px;height:1px;background:#e3e3e3"></div>
<div class="a" style="left:203px;top:655px;width:775.5px;height:1px;background:#e3e3e3"></div>
<div class="a" style="left:203px;top:683px;width:775.5px;height:1px;background:#e3e3e3"></div>
<div class="a" style="left:203px;top:711px;width:775.5px;height:1px;background:#e3e3e3"></div>
<div class="a" style="left:240px;top:546px;width:1px;height:25px;background:#cfcfcf"></div>
<div class="a" style="left:240px;top:600px;width:1px;height:124px;background:#dde3ee"></div>
<div class="a" style="left:295px;top:546px;width:1px;height:25px;background:#cfcfcf"></div>
<div class="a" style="left:295px;top:600px;width:1px;height:124px;background:#dde3ee"></div>
<div class="a" style="left:395px;top:546px;width:1px;height:25px;background:#cfcfcf"></div>
<div class="a" style="left:395px;top:600px;width:1px;height:124px;background:#dde3ee"></div>
<div class="a" style="left:490px;top:546px;width:1px;height:25px;background:#cfcfcf"></div>
<div class="a" style="left:490px;top:600px;width:1px;height:124px;background:#dde3ee"></div>
<div class="a" style="left:979px;top:546px;width:1px;height:25px;background:#cfcfcf"></div>
<div class="a" style="left:979px;top:600px;width:1px;height:124px;background:#dde3ee"></div>
<div class="t " style="left:245.5px;top:551.68px;font-size:15.5px;color:#333;">HCC</div>
<div class="t " style="left:301.0px;top:551.68px;font-size:15.5px;color:#333;">Added</div>
<div class="t " style="left:400.5px;top:551.68px;font-size:15.5px;color:#333;">Code</div>
<div class="t " style="left:495.5px;top:551.68px;font-size:15.5px;color:#333;">Description</div>
<svg class="a" style="left:280px;top:558px" width="9" height="6" viewBox="0 0 9 6"><path d="M0.5 5 L8 5 L4.25 0.5Z" fill="#333"/></svg>
<svg class="a" style="left:380px;top:558px" width="9" height="6" viewBox="0 0 9 6"><path d="M0.5 0.5 L8 0.5 L4.25 5Z" fill="#333"/></svg>
<div class="a" style="left:204px;top:574px;width:25px;height:21px;border:1.5px solid #3a3a3a;background:#dce2ec"></div>
<svg class="a" style="left:257px;top:576px" width="21" height="21" viewBox="0 0 21 21"><circle cx="10.5" cy="10" r="10" fill="#f08a3a"/></svg>
<div class="t " style="left:300.6px;top:578.51px;font-size:15.7px;color:#fff;">9/19/2024</div>
<div class="t " style="left:398.5px;top:578.51px;font-size:15.7px;color:#fff;">E030</div>
<div class="t " style="left:491.5px;top:578.17px;font-size:16.1px;color:#fff;">Congenital hypothyroidism with diffuse goiter</div>
<div class="a" style="left:204px;top:602px;width:25px;height:21px;border:1.5px solid #3a3a3a;background:#fff"></div>
<svg class="a" style="left:257px;top:604px" width="21" height="21" viewBox="0 0 21 21"><circle cx="10.5" cy="10" r="10" fill="#f08a3a"/></svg>
<div class="t " style="left:300.6px;top:606.61px;font-size:15.7px;color:#333;">9/18/2024</div>
<div class="t " style="left:398.5px;top:606.61px;font-size:15.7px;color:#333;">E782</div>
<div class="t " style="left:491.5px;top:606.27px;font-size:16.1px;color:#333;">Mixed hyperlipidemia</div>
<div class="a" style="left:204px;top:630px;width:25px;height:21px;border:1.5px solid #3a3a3a;background:#fff"></div>
<div class="t " style="left:300.6px;top:634.71px;font-size:15.7px;color:#333;">5/21/2024</div>
<div class="t " style="left:398.5px;top:634.71px;font-size:15.7px;color:#333;">U071</div>
<div class="t " style="left:491.5px;top:634.37px;font-size:16.1px;color:#333;text-decoration:underline;text-underline-offset:2px;">COVID-19</div>
<div class="a" style="left:204px;top:658px;width:25px;height:21px;border:1.5px solid #3a3a3a;background:#fff"></div>
<div class="t " style="left:300.6px;top:662.81px;font-size:15.7px;color:#333;">4/5/2024</div>
<div class="t " style="left:398.5px;top:662.81px;font-size:15.7px;color:#333;">J45991</div>
<div class="t " style="left:491.5px;top:662.47px;font-size:16.1px;color:#333;">Cough variant asthma</div>
<div class="a" style="left:204px;top:686px;width:25px;height:21px;border:1.5px solid #3a3a3a;background:#fff"></div>
<div class="t " style="left:300.6px;top:690.91px;font-size:15.7px;color:#333;">8/9/2023</div>
<div class="t " style="left:398.5px;top:690.91px;font-size:15.7px;color:#333;">R059</div>
<div class="t " style="left:491.5px;top:690.57px;font-size:16.1px;color:#333;text-decoration:underline;text-underline-offset:2px;">Cough, unspecified</div>
<div class="a" style="left:204px;top:714px;width:25px;height:21px;border:1.5px solid #3a3a3a;background:#fff"></div>
<div class="t " style="left:300.6px;top:719.01px;font-size:15.7px;color:#333;">5/11/2023</div>
<div class="t " style="left:398.5px;top:719.01px;font-size:15.7px;color:#333;">M6281</div>
<div class="t " style="left:491.5px;top:718.67px;font-size:16.1px;color:#333;">Muscle weakness (generalized)</div>
</div><div class="a" style="left:203px;top:723px;width:793px;height:1px;background:#b4b4b4"></div>
<div class="a" style="left:980px;top:574px;width:13px;height:13px;border:1px solid #b8b8b8;background:#fff"></div>
<svg class="a" style="left:983.0px;top:578.5px" width="9" height="6" viewBox="0 0 9 6"><path d="M0.8 5 L8.2 5 L4.5 0.8Z" fill="#333"/></svg>
<div class="a" style="left:980px;top:589px;width:13px;height:43px;border:1px solid #b5b5b5;background:#fafafa"></div>
<div class="a" style="left:980px;top:707px;width:13px;height:13px;border:1px solid #b8b8b8;background:#fff"></div>
<svg class="a" style="left:983.0px;top:711.5px" width="9" height="6" viewBox="0 0 9 6"><path d="M0.8 0.8 L8.2 0.8 L4.5 5Z" fill="#333"/></svg>
<div class="a" style="left:202px;top:735px;width:795px;height:4px;background:#c9a8e8"></div>
<svg class="a" style="left:204px;top:746px" width="26" height="22" viewBox="0 0 26 22"><g fill="#484848"><rect x="0" y="0" width="25" height="4" rx="1.5"/><rect x="0" y="7.8" width="25" height="4" rx="1.5"/><rect x="0" y="15.6" width="25" height="4" rx="1.5"/></g></svg>
<div class="t " style="left:235.9px;top:748.65px;font-size:17.9px;color:#222;text-decoration:underline;text-decoration-color:#555;text-decoration-thickness:1.6px;text-underline-offset:1px;">Medication List</div>
<div class="a" style="left:202px;top:772px;width:795px;height:1px;background:#c9a8e8"></div>
<svg class="a" style="left:703px;top:743px" width="24" height="24" viewBox="0 0 24 24"><defs><radialGradient id="rg715755" cx="50%" cy="40%" r="60%"><stop offset="0.55" stop-color="#f4f4f4"/><stop offset="1" stop-color="#d0d0d0"/></radialGradient></defs><circle cx="12" cy="12" r="11.5" fill="url(#rg715755)"/><circle cx="12" cy="11.5" r="8" fill="#f7f7f7"/><circle cx="12" cy="11.5" r="6.6" fill="#6393cf"/></svg>
<div class="t " style="left:733.7px;top:749.10px;font-size:14.65px;color:#333;">Active</div>
<svg class="a" style="left:778px;top:743px" width="24" height="24" viewBox="0 0 24 24"><defs><radialGradient id="rg790755" cx="50%" cy="40%" r="60%"><stop offset="0.55" stop-color="#f4f4f4"/><stop offset="1" stop-color="#d0d0d0"/></radialGradient></defs><circle cx="12" cy="12" r="11.5" fill="url(#rg790755)"/><circle cx="12" cy="11.5" r="8" fill="#f7f7f7"/></svg>
<div class="t " style="left:807.9px;top:748.84px;font-size:14.95px;color:#333;">Discontinued</div>
<svg class="a" style="left:899px;top:743px" width="24" height="24" viewBox="0 0 24 24"><defs><radialGradient id="rg911755" cx="50%" cy="40%" r="60%"><stop offset="0.55" stop-color="#f4f4f4"/><stop offset="1" stop-color="#d0d0d0"/></radialGradient></defs><circle cx="12" cy="12" r="11.5" fill="url(#rg911755)"/><circle cx="12" cy="11.5" r="8" fill="#f7f7f7"/></svg>
<div class="t " style="left:929px;top:749.14px;font-size:14.6px;color:#333;">Cancelled</div>
<div class="a" style="left:202px;top:775px;width:793px;height:64px;border:1px solid #b4b4b4;background:#fff"></div>
<div class="a" style="left:0;top:0;width:1882px;height:845px;clip-path:inset(775px 885px 6px 202px)"><div class="a" style="left:203px;top:776px;width:793px;height:25px;background:#f7f7f7"></div>
<div class="a" style="left:203px;top:801px;width:793px;height:1px;background:#a8a8a8"></div>
<div class="a" style="left:979px;top:802px;width:17px;height:42px;background:#f0f0f0"></div>
<div class="a" style="left:203px;top:802px;width:775.5px;height:27px;background:#517bb0"></div>
<div class="a" style="left:203px;top:829px;width:775.5px;height:1px;background:#e3e3e3"></div>
<div class="a" style="left:240px;top:776px;width:1px;height:25px;background:#cfcfcf"></div>
<div class="a" style="left:240px;top:829px;width:1px;height:14px;background:#dde3ee"></div>
<div class="a" style="left:340px;top:776px;width:1px;height:25px;background:#cfcfcf"></div>
<div class="a" style="left:340px;top:829px;width:1px;height:14px;background:#dde3ee"></div>
<div class="a" style="left:659px;top:776px;width:1px;height:25px;background:#cfcfcf"></div>
<div class="a" style="left:659px;top:829px;width:1px;height:14px;background:#dde3ee"></div>
<div class="a" style="left:979px;top:776px;width:1px;height:25px;background:#cfcfcf"></div>
<div class="a" style="left:979px;top:829px;width:1px;height:14px;background:#dde3ee"></div>
<div class="t " style="left:245.5px;top:781.88px;font-size:15.5px;color:#333;">Date</div>
<div class="t " style="left:345.5px;top:781.88px;font-size:15.5px;color:#333;">Drug Name</div>
<div class="t " style="left:665.0px;top:781.88px;font-size:15.5px;color:#333;">Strength</div>
<svg class="a" style="left:325px;top:788px" width="9" height="6" viewBox="0 0 9 6"><path d="M0.5 0.5 L8 0.5 L4.25 5Z" fill="#333"/></svg>
<div class="a" style="left:204px;top:803px;width:25px;height:21px;border:1.5px solid #3a3a3a;background:#dce2ec"></div>
<div class="t " style="left:245px;top:809.21px;font-size:15.7px;color:#fff;">9/17/2024</div>
<div class="t " style="left:345.6px;top:809.38px;font-size:15.5px;color:#fff;">Simvastatin</div>
<div class="t " style="left:664.4px;top:809.38px;font-size:15.5px;color:#fff;">40 mg</div>
<div class="a" style="left:204px;top:831px;width:25px;height:21px;border:1.5px solid #3a3a3a;background:#fff"></div>
<div class="t " style="left:245px;top:834.71px;font-size:15.7px;color:#333;">4/5/2024</div>
<div class="t " style="left:345.6px;top:834.88px;font-size:15.5px;color:#333;">Insulin Glargine (Prefilled Pen)</div>
<div class="t " style="left:664.4px;top:834.88px;font-size:15.5px;color:#333;">of, 100 units/ml</div>
</div><div class="a" style="left:980px;top:803px;width:13px;height:13px;border:1px solid #b8b8b8;background:#fff"></div>
<svg class="a" style="left:983.0px;top:807.5px" width="9" height="6" viewBox="0 0 9 6"><path d="M0.8 5 L8.2 5 L4.5 0.8Z" fill="#333"/></svg>
</div>
<div class="a" style="left:1023px;top:69px;width:820px;height:481px;border:1px solid #adadad;background:#f7f7f7"></div>
<div class="t " style="left:1032px;top:78.68px;font-size:15.5px;color:#9a9a9a;">Clinical Evaluation</div>
<svg class="a" style="left:1800px;top:80px" width="9" height="11" viewBox="0 0 9 11"><rect x="2" y="0.5" width="5" height="5.5" fill="#444"/><rect x="0.5" y="5.5" width="8" height="1.5" fill="#444"/><rect x="4" y="7" width="1.2" height="3.5" fill="#444"/><rect x="5.5" y="1" width="1" height="4.5" fill="#888"/></svg>
<svg class="a" style="left:1823px;top:81px" width="10" height="10" viewBox="0 0 10 10"><path d="M0.8 0.8 L9.2 9.2 M9.2 0.8 L0.8 9.2" stroke="#333" stroke-width="1.4"/></svg>
<div class="t " style="left:1041.5px;top:117.59px;font-size:19.98px;color:#1a1a1a;-webkit-text-stroke:0.4px #1a1a1a;text-decoration:underline;text-decoration-thickness:1.3px;text-underline-offset:2px;">Progress Note&nbsp;</div>
<svg class="a" style="left:1176px;top:119px" width="17" height="17" viewBox="0 0 17 17"><circle cx="8.5" cy="8.5" r="7.8" fill="#f0607a"/><path d="M5.3 5.3 L11.7 11.7 M11.7 5.3 L5.3 11.7" stroke="#fff" stroke-width="2.3"/></svg>
<div class="t " style="left:1458.5px;top:123.09px;font-size:11.0px;color:#333;font-weight:bold;">Date:</div>
<div class="a" style="left:1493px;top:112px;width:119px;height:28px;border:1px solid #b0b0b0;background:#fff"></div>
<div class="t " style="left:1499.6px;top:119.18px;font-size:17.98px;color:#333;">10/2/2024</div>
<svg class="a" style="left:1597px;top:119px" width="14" height="14" viewBox="0 0 14 14"><rect x="1" y="2" width="12" height="11" fill="none" stroke="#555" stroke-width="1.1"/><rect x="1" y="2" width="12" height="2.2" fill="#555"/><rect x="3" y="0.5" width="1.2" height="2.5" fill="#555"/><rect x="9.8" y="0.5" width="1.2" height="2.5" fill="#555"/><rect x="3.3" y="6.5" width="2.5" height="2.3" fill="#555"/></svg>
<svg class="a" style="left:1630px;top:104px" width="30" height="30" viewBox="0 0 30 30"><circle cx="15" cy="15" r="15" fill="#f7c04a"/><path d="M15 15 L30 15 A15 15 0 0 1 15 30 L8 22Z" fill="#f3a83a" opacity="0.6"/><path d="M9 11.5 L21 11.5 M12 8 L8.5 11.5 L12 15 M9 18.5 L21 18.5 M18 15 L21.5 18.5 L18 22" stroke="#333" stroke-width="2.2" fill="none"/></svg>
<div class="t" style="left:1585.0px;width:120px;text-align:center;top:137.29px;font-size:11.0px;color:#8a8a8a;">Follow Up</div>
<svg class="a" style="left:1689px;top:104px" width="30" height="30" viewBox="0 0 30 30"><circle cx="15" cy="15" r="15" fill="#123a5c"/><path d="M15 15 L30 15 A15 15 0 0 1 15 30 L10 25Z" fill="#0c2a44" opacity="0.7"/><rect x="9" y="6" width="14" height="15" fill="#d55a2a"/><rect x="15" y="6" width="8" height="15" fill="#b8452a"/><rect x="11" y="8.5" width="5" height="1.2" fill="#f6c24a"/><rect x="11" y="11" width="5" height="1.2" fill="#f6c24a"/><rect x="19.5" y="12" width="2" height="2" fill="#f6c24a"/><path d="M12 16 L12 23 M9 20 L12 23.5 L15 20" stroke="#fff" stroke-width="2" fill="none"/></svg>
<div class="t" style="left:1644.1px;width:120px;text-align:center;top:137.29px;font-size:11.0px;color:#8a8a8a;">Load Last</div>
<svg class="a" style="left:1748px;top:104px" width="30" height="30" viewBox="0 0 30 30"><circle cx="15" cy="15" r="15" fill="#f08a70"/><path d="M15 15 L30 15 A15 15 0 0 1 15 30 L8 23Z" fill="#e07060" opacity="0.5"/><rect x="8.5" y="6" width="13" height="18" fill="#2b3e55"/><rect x="9.5" y="7" width="11" height="16" fill="#d8ecf8"/><rect x="12.5" y="4.5" width="5" height="3" rx="1" fill="#f6c24a"/><g fill="#9cc6e6"><rect x="11" y="10" width="8" height="1"/><rect x="11" y="12.5" width="8" height="1"/><rect x="11" y="15" width="8" height="1"/><rect x="11" y="17.5" width="8" height="1"/></g></svg>
<div class="t" style="left:1702.9px;width:120px;text-align:center;top:137.29px;font-size:11.0px;color:#8a8a8a;">Templates</div>
<svg class="a" style="left:1802px;top:104px" width="30" height="30" viewBox="0 0 30 30"><circle cx="15" cy="15" r="15" fill="#f07a22"/><path d="M15 15 L30 15 A15 15 0 0 1 15 30 L9 24Z" fill="#e0601a" opacity="0.5"/><path d="M8.5 8 L19.5 8 L22 10.5 L22 22 L8.5 22Z" fill="#2b3e55"/><rect x="11" y="8" width="8" height="4.5" fill="#fff"/><rect x="16.5" y="8.8" width="1.5" height="3" fill="#2b3e55"/><rect x="10.5" y="15" width="10" height="6" fill="#fff"/></svg>
<div class="t" style="left:1757.2px;width:120px;text-align:center;top:137.29px;font-size:11.0px;color:#8a8a8a;">Save As</div>
<div class="a" style="left:1031px;top:155px;width:803px;height:387px;border:1px solid #b8b8b8;background:#fff"></div>
<div class="a" style="left:1819px;top:156px;width:15px;height:386px;background:#f0f0f0"></div>
<div class="a" style="left:1820px;top:157px;width:12px;height:12px;border:1px solid #b8b8b8;background:#fff"></div>
<svg class="a" style="left:1822.5px;top:161.0px" width="9" height="6" viewBox="0 0 9 6"><path d="M0.8 5 L8.2 5 L4.5 0.8Z" fill="#333"/></svg>
<div class="a" style="left:1820px;top:172px;width:12px;height:171px;border:1px solid #b5b5b5;background:#fafafa"></div>
<div class="a" style="left:1820px;top:527px;width:12px;height:12px;border:1px solid #b8b8b8;background:#fff"></div>
<svg class="a" style="left:1822.5px;top:531.0px" width="9" height="6" viewBox="0 0 9 6"><path d="M0.8 0.8 L8.2 0.8 L4.5 5Z" fill="#333"/></svg>
<svg class="a" style="left:1038px;top:165px" width="8" height="7" viewBox="0 0 8 7"><path d="M7 0.5 L7 6.3 L0.8 6.3Z" fill="#444"/></svg>
<div class="t " style="left:1051.8px;top:160.07px;font-size:16.1px;color:#333;-webkit-text-stroke:0.3px #333;text-decoration:underline;text-decoration-thickness:1.3px;text-underline-offset:1px;">Allergies</div>
<div class="a" style="left:1051px;top:179px;width:743px;height:1px;background:#6f98d0"></div>
<div class="a" style="left:1071px;top:202px;width:747px;height:1px;background:#7a9fd6"></div>
<svg class="a" style="left:1795px;top:158px" width="21" height="21" viewBox="0 0 21 21"><circle cx="10.5" cy="10.5" r="10.2" fill="#2f9e5e"/><path d="M10.5 10.5 L20.7 10.5 A10.2 10.2 0 0 1 10.5 20.7Z" fill="#3ab070" opacity="0.6"/><rect x="4.3" y="8.3" width="12.4" height="4.4" fill="#fff"/><rect x="8.3" y="4.3" width="4.4" height="12.4" fill="#fff"/><rect x="10.5" y="10.5" width="6.2" height="2.2" fill="#cfe8d8" opacity="0.6"/></svg>
<svg class="a" style="left:1038px;top:215px" width="8" height="7" viewBox="0 0 8 7"><path d="M7 0.5 L7 6.3 L0.8 6.3Z" fill="#444"/></svg>
<div class="t " style="left:1051.8px;top:209.11px;font-size:16.7px;color:#333;-webkit-text-stroke:0.3px #333;text-decoration:underline;text-decoration-thickness:1.3px;text-underline-offset:1px;">Comportamiento</div>
<div class="a" style="left:1051px;top:229px;width:743px;height:1px;background:#6f98d0"></div>
<div class="a" style="left:1071px;top:252px;width:747px;height:1px;background:#7a9fd6"></div>
<svg class="a" style="left:1795px;top:207px" width="21" height="21" viewBox="0 0 21 21"><circle cx="10.5" cy="10.5" r="10.2" fill="#2f9e5e"/><path d="M10.5 10.5 L20.7 10.5 A10.2 10.2 0 0 1 10.5 20.7Z" fill="#3ab070" opacity="0.6"/><rect x="4.3" y="8.3" width="12.4" height="4.4" fill="#fff"/><rect x="8.3" y="4.3" width="4.4" height="12.4" fill="#fff"/><rect x="10.5" y="10.5" width="6.2" height="2.2" fill="#cfe8d8" opacity="0.6"/></svg>
<svg class="a" style="left:1038px;top:264px" width="8" height="7" viewBox="0 0 8 7"><path d="M7 0.5 L7 6.3 L0.8 6.3Z" fill="#444"/></svg>
<div class="t " style="left:1051.8px;top:258.96px;font-size:16.35px;color:#333;-webkit-text-stroke:0.3px #333;text-decoration:underline;text-decoration-thickness:1.3px;text-underline-offset:1px;">Instructiones</div>
<div class="a" style="left:1051px;top:278px;width:743px;height:1px;background:#6f98d0"></div>
<div class="a" style="left:1071px;top:301px;width:747px;height:1px;background:#7a9fd6"></div>
<svg class="a" style="left:1795px;top:257px" width="21" height="21" viewBox="0 0 21 21"><circle cx="10.5" cy="10.5" r="10.2" fill="#2f9e5e"/><path d="M10.5 10.5 L20.7 10.5 A10.2 10.2 0 0 1 10.5 20.7Z" fill="#3ab070" opacity="0.6"/><rect x="4.3" y="8.3" width="12.4" height="4.4" fill="#fff"/><rect x="8.3" y="4.3" width="4.4" height="12.4" fill="#fff"/><rect x="10.5" y="10.5" width="6.2" height="2.2" fill="#cfe8d8" opacity="0.6"/></svg>
<svg class="a" style="left:1038px;top:314px" width="8" height="7" viewBox="0 0 8 7"><path d="M7 0.5 L7 6.3 L0.8 6.3Z" fill="#444"/></svg>
<div class="t " style="left:1051.8px;top:308.98px;font-size:15.8px;color:#333;-webkit-text-stroke:0.3px #333;text-decoration:underline;text-decoration-thickness:1.3px;text-underline-offset:1px;">Evaluación de Gabriel</div>
<div class="a" style="left:1051px;top:328px;width:743px;height:1px;background:#6f98d0"></div>
<div class="a" style="left:1071px;top:351px;width:747px;height:1px;background:#7a9fd6"></div>
<svg class="a" style="left:1795px;top:306px" width="21" height="21" viewBox="0 0 21 21"><circle cx="10.5" cy="10.5" r="10.2" fill="#2f9e5e"/><path d="M10.5 10.5 L20.7 10.5 A10.2 10.2 0 0 1 10.5 20.7Z" fill="#3ab070" opacity="0.6"/><rect x="4.3" y="8.3" width="12.4" height="4.4" fill="#fff"/><rect x="8.3" y="4.3" width="4.4" height="12.4" fill="#fff"/><rect x="10.5" y="10.5" width="6.2" height="2.2" fill="#cfe8d8" opacity="0.6"/></svg>
<svg class="a" style="left:1038px;top:363px" width="8" height="7" viewBox="0 0 8 7"><path d="M7 0.5 L7 6.3 L0.8 6.3Z" fill="#444"/></svg>
<div class="t " style="left:1051.8px;top:358.10px;font-size:16.3px;color:#333;-webkit-text-stroke:0.3px #333;text-decoration:underline;text-decoration-thickness:1.3px;text-underline-offset:1px;">Chief Complaint</div>
<div class="a" style="left:1051px;top:378px;width:743px;height:1px;background:#6f98d0"></div>
<div class="a" style="left:1071px;top:400px;width:747px;height:1px;background:#7a9fd6"></div>
<svg class="a" style="left:1795px;top:356px" width="21" height="21" viewBox="0 0 21 21"><circle cx="10.5" cy="10.5" r="10.2" fill="#2f9e5e"/><path d="M10.5 10.5 L20.7 10.5 A10.2 10.2 0 0 1 10.5 20.7Z" fill="#3ab070" opacity="0.6"/><rect x="4.3" y="8.3" width="12.4" height="4.4" fill="#fff"/><rect x="8.3" y="4.3" width="4.4" height="12.4" fill="#fff"/><rect x="10.5" y="10.5" width="6.2" height="2.2" fill="#cfe8d8" opacity="0.6"/></svg>
<svg class="a" style="left:1038px;top:413px" width="8" height="7" viewBox="0 0 8 7"><path d="M7 0.5 L7 6.3 L0.8 6.3Z" fill="#444"/></svg>
<div class="t " style="left:1051.8px;top:408.33px;font-size:15.5px;color:#333;-webkit-text-stroke:0.3px #333;text-decoration:underline;text-decoration-thickness:1.3px;text-underline-offset:1px;">Present Illness</div>
<div class="a" style="left:1051px;top:427px;width:743px;height:1px;background:#6f98d0"></div>
<div class="a" style="left:1071px;top:450px;width:747px;height:1px;background:#7a9fd6"></div>
<svg class="a" style="left:1795px;top:405px" width="21" height="21" viewBox="0 0 21 21"><circle cx="10.5" cy="10.5" r="10.2" fill="#2f9e5e"/><path d="M10.5 10.5 L20.7 10.5 A10.2 10.2 0 0 1 10.5 20.7Z" fill="#3ab070" opacity="0.6"/><rect x="4.3" y="8.3" width="12.4" height="4.4" fill="#fff"/><rect x="8.3" y="4.3" width="4.4" height="12.4" fill="#fff"/><rect x="10.5" y="10.5" width="6.2" height="2.2" fill="#cfe8d8" opacity="0.6"/></svg>
<svg class="a" style="left:1038px;top:462px" width="8" height="7" viewBox="0 0 8 7"><path d="M7 0.5 L7 6.3 L0.8 6.3Z" fill="#444"/></svg>
<div class="t " style="left:1051.8px;top:457.84px;font-size:15.55px;color:#333;-webkit-text-stroke:0.3px #333;text-decoration:underline;text-decoration-thickness:1.3px;text-underline-offset:1px;">Review of Systrems</div>
<div class="a" style="left:1051px;top:477px;width:743px;height:1px;background:#6f98d0"></div>
<div class="a" style="left:1071px;top:499px;width:747px;height:1px;background:#7a9fd6"></div>
<svg class="a" style="left:1795px;top:455px" width="21" height="21" viewBox="0 0 21 21"><circle cx="10.5" cy="10.5" r="10.2" fill="#2f9e5e"/><path d="M10.5 10.5 L20.7 10.5 A10.2 10.2 0 0 1 10.5 20.7Z" fill="#3ab070" opacity="0.6"/><rect x="4.3" y="8.3" width="12.4" height="4.4" fill="#fff"/><rect x="8.3" y="4.3" width="4.4" height="12.4" fill="#fff"/><rect x="10.5" y="10.5" width="6.2" height="2.2" fill="#cfe8d8" opacity="0.6"/></svg>
<svg class="a" style="left:1038px;top:512px" width="8" height="7" viewBox="0 0 8 7"><path d="M7 0.5 L7 6.3 L0.8 6.3Z" fill="#444"/></svg>
<div class="t " style="left:1051.8px;top:506.67px;font-size:16.4px;color:#333;-webkit-text-stroke:0.3px #333;text-decoration:underline;text-decoration-thickness:1.3px;text-underline-offset:1px;">Medications</div>
<div class="a" style="left:1051px;top:526px;width:743px;height:1px;background:#6f98d0"></div>
<svg class="a" style="left:1795px;top:505px" width="21" height="21" viewBox="0 0 21 21"><circle cx="10.5" cy="10.5" r="10.2" fill="#2f9e5e"/><path d="M10.5 10.5 L20.7 10.5 A10.2 10.2 0 0 1 10.5 20.7Z" fill="#3ab070" opacity="0.6"/><rect x="4.3" y="8.3" width="12.4" height="4.4" fill="#fff"/><rect x="8.3" y="4.3" width="4.4" height="12.4" fill="#fff"/><rect x="10.5" y="10.5" width="6.2" height="2.2" fill="#cfe8d8" opacity="0.6"/></svg>
<div class="a" style="left:1023px;top:557px;width:820px;height:285px;border:1px solid #adadad;background:#f7f7f7"></div>
<div class="a" style="left:0;top:0;width:1882px;height:845px;clip-path:inset(557px 38px 6px 1023px)"><div class="t " style="left:1032.2px;top:567.02px;font-size:15.22px;color:#9a9a9a;">Assessment / Plan</div>
<svg class="a" style="left:1800px;top:568px" width="9" height="11" viewBox="0 0 9 11"><rect x="2" y="0.5" width="5" height="5.5" fill="#444"/><rect x="0.5" y="5.5" width="8" height="1.5" fill="#444"/><rect x="4" y="7" width="1.2" height="3.5" fill="#444"/><rect x="5.5" y="1" width="1" height="4.5" fill="#888"/></svg>
<svg class="a" style="left:1823px;top:569px" width="10" height="10" viewBox="0 0 10 10"><path d="M0.8 0.8 L9.2 9.2 M9.2 0.8 L0.8 9.2" stroke="#333" stroke-width="1.4"/></svg>
<div class="t" style="left:795.5px;width:300px;text-align:right;top:595.86px;font-size:11.27px;color:#333;">Assessment</div>
<div class="t" style="left:795.5px;width:300px;text-align:right;top:611.96px;font-size:11.27px;color:#333;">Comment</div>
<div class="t" style="left:904.0px;width:300px;text-align:right;top:595.86px;font-size:11.27px;color:#333;">Plan</div>
<div class="t" style="left:904.0px;width:300px;text-align:right;top:611.96px;font-size:11.27px;color:#333;">Comment</div>
<div class="a" style="left:1101px;top:594px;width:33px;height:29px;border:1px solid #b0b0b0;background:#fff"></div>
<svg class="a" style="left:1105px;top:603px" width="18" height="14" viewBox="0 0 18 14"><path d="M0.5 0.5 L12 0.5 L15 3.5 L15 12.5 L0.5 12.5Z" fill="#fff" stroke="#bbb" stroke-width="1"/><text x="7" y="10.5" font-size="10" text-anchor="middle" fill="#aaa" font-family="Liberation Serif">A</text></svg>
<svg class="a" style="left:1123px;top:606px" width="9" height="6" viewBox="0 0 9 6"><path d="M0.5 0.5 L8 0.5 L4.25 5Z" fill="#333"/></svg>
<div class="a" style="left:1210px;top:594px;width:33px;height:29px;border:1px solid #b0b0b0;background:#fff"></div>
<svg class="a" style="left:1214px;top:603px" width="18" height="14" viewBox="0 0 18 14"><path d="M0.5 0.5 L12 0.5 L15 3.5 L15 12.5 L0.5 12.5Z" fill="#fff" stroke="#bbb" stroke-width="1"/><text x="7" y="10.5" font-size="10" text-anchor="middle" fill="#aaa" font-family="Liberation Serif">A</text></svg>
<svg class="a" style="left:1232px;top:606px" width="9" height="6" viewBox="0 0 9 6"><path d="M0.5 0.5 L8 0.5 L4.25 5Z" fill="#333"/></svg>
<div class="a" style="left:1531px;top:596px;width:25px;height:24px;border:1.3px solid #666;background:#fafafa"></div>
<div class="t " style="left:1561.5px;top:603.17px;font-size:13.5px;color:#555;">Show Removed Items</div>
<div class="a" style="left:1712px;top:596px;width:25px;height:24px;border:1.3px solid #666;background:#fafafa"></div>
<div class="t " style="left:1743px;top:603.17px;font-size:13.5px;color:#555;">Edit Items</div>
<svg class="a" style="left:1819px;top:597px" width="23" height="23" viewBox="0 0 23 23"><path d="M4.2 6.5 A9.3 9.3 0 0 1 20.3 11" stroke="#2ea6ea" stroke-width="1.7" fill="none"/><path d="M20.3 11.5 A9.3 9.3 0 0 1 2.2 13.5" stroke="#2ea6ea" stroke-width="1.8" fill="none" stroke-dasharray="1.6 1.6"/><path d="M0.8 4.2 L7.6 3.8 L3.2 9.6Z" fill="#2ea6ea"/></svg>
<div class="a" style="left:1024px;top:627px;width:818px;height:211px;border-top:1px solid #c8c8c8;border-bottom:1px solid #c0c0c0;background:#fff"></div>
<div class="a" style="left:1039px;top:628px;width:1px;height:215px;background:#e0e0e0"></div>
<div class="a" style="left:1040px;top:628px;width:785px;height:30px;background:#e5f0f9"></div>
<div class="a" style="left:1040px;top:658px;width:785px;height:1px;background:#d6e2ee"></div>
<svg class="a" style="left:1030px;top:640px" width="6" height="9" viewBox="0 0 6 9"><path d="M0.5 0.5 L5 4.25 L0.5 8Z" fill="#333"/></svg>
<svg class="a" style="left:1061px;top:641px" width="7" height="7" viewBox="0 0 7 7"><path d="M6 0.5 L6 6 L0.5 6Z" fill="#333"/></svg>
<div class="t " style="left:1072px;top:637.84px;font-size:14.96px;color:#333;font-weight:bold;">Section: Assessment</div>
<div class="a" style="left:1249px;top:659px;width:1px;height:184px;background:#dde3ee"></div>
<div class="t " style="left:1075.2px;top:667.99px;font-size:15.49px;color:#333;">Patient Summary</div>
<div class="t " style="left:1251px;top:664.03px;font-size:15.79px;color:#222;text-decoration:underline;text-underline-offset:1.5px;">Male patient of 29 year(s)</div>
<div class="a" style="left:1070px;top:690px;width:710px;height:1px;background:#e6e6e6"></div>
<div class="a" style="left:1780px;top:660px;width:43px;height:29px;border:1px solid #c0c0c0;background:#fff"></div>
<svg class="a" style="left:1786px;top:667px" width="18" height="14" viewBox="0 0 18 14"><path d="M0.5 0.5 L12 0.5 L15 3.5 L15 12.5 L0.5 12.5Z" fill="#fff" stroke="#bbb" stroke-width="1"/><text x="7" y="10.5" font-size="10" text-anchor="middle" fill="#aaa" font-family="Liberation Serif">A</text></svg>
<svg class="a" style="left:1810px;top:672px" width="9" height="6" viewBox="0 0 9 6"><path d="M0.5 0.5 L8 0.5 L4.25 5Z" fill="#333"/></svg>
<div class="t " style="left:1075.2px;top:698.99px;font-size:15.49px;color:#333;">Allergies</div>
<div class="t " style="left:1251px;top:695.17px;font-size:15.63px;color:#222;text-decoration:underline;text-underline-offset:1.5px;">Allergies last reviewed by Gabirle J Ortiz Nieves on 9/17/2024 4:53:02 PM.</div>
<div class="a" style="left:1070px;top:721px;width:710px;height:1px;background:#e6e6e6"></div>
<div class="a" style="left:1780px;top:691px;width:43px;height:29px;border:1px solid #c0c0c0;background:#fff"></div>
<svg class="a" style="left:1786px;top:698px" width="18" height="14" viewBox="0 0 18 14"><path d="M0.5 0.5 L12 0.5 L15 3.5 L15 12.5 L0.5 12.5Z" fill="#fff" stroke="#bbb" stroke-width="1"/><text x="7" y="10.5" font-size="10" text-anchor="middle" fill="#aaa" font-family="Liberation Serif">A</text></svg>
<svg class="a" style="left:1810px;top:703px" width="9" height="6" viewBox="0 0 9 6"><path d="M0.5 0.5 L8 0.5 L4.25 5Z" fill="#333"/></svg>
<div class="t " style="left:1075.2px;top:729.99px;font-size:15.49px;color:#333;">Active Allergies</div>
<div class="t " style="left:1251px;top:726.62px;font-size:15.1px;color:#222;text-decoration:underline;text-underline-offset:1.5px;">Crustacean</div>
<div class="a" style="left:1070px;top:752px;width:710px;height:1px;background:#e6e6e6"></div>
<div class="a" style="left:1780px;top:722px;width:43px;height:29px;border:1px solid #c0c0c0;background:#fff"></div>
<svg class="a" style="left:1786px;top:729px" width="18" height="14" viewBox="0 0 18 14"><path d="M0.5 0.5 L12 0.5 L15 3.5 L15 12.5 L0.5 12.5Z" fill="#fff" stroke="#bbb" stroke-width="1"/><text x="7" y="10.5" font-size="10" text-anchor="middle" fill="#aaa" font-family="Liberation Serif">A</text></svg>
<svg class="a" style="left:1810px;top:734px" width="9" height="6" viewBox="0 0 9 6"><path d="M0.5 0.5 L8 0.5 L4.25 5Z" fill="#333"/></svg>
<div class="t " style="left:1075.2px;top:760.99px;font-size:15.49px;color:#333;">Problem List</div>
<div class="t " style="left:1251px;top:756.86px;font-size:15.99px;color:#222;text-decoration:underline;text-underline-offset:1.5px;">E030 Congenital hypothyroidism with diffuse goiter, E782 Mixed hyperlip...</div>
<div class="a" style="left:1070px;top:783px;width:710px;height:1px;background:#e6e6e6"></div>
<div class="a" style="left:1780px;top:753px;width:43px;height:29px;border:1px solid #c0c0c0;background:#fff"></div>
<svg class="a" style="left:1786px;top:760px" width="18" height="14" viewBox="0 0 18 14"><path d="M0.5 0.5 L12 0.5 L15 3.5 L15 12.5 L0.5 12.5Z" fill="#fff" stroke="#bbb" stroke-width="1"/><text x="7" y="10.5" font-size="10" text-anchor="middle" fill="#aaa" font-family="Liberation Serif">A</text></svg>
<svg class="a" style="left:1810px;top:765px" width="9" height="6" viewBox="0 0 9 6"><path d="M0.5 0.5 L8 0.5 L4.25 5Z" fill="#333"/></svg>
<div class="t " style="left:1075.2px;top:791.99px;font-size:15.49px;color:#333;">Active Medications</div>
<div class="t " style="left:1251px;top:788.50px;font-size:15.24px;color:#222;text-decoration:underline;text-underline-offset:1.5px;">Simvastatin 40 mg Take One Every Day , PredniSONE 12 Day Dose Pack 1...</div>
<div class="a" style="left:1070px;top:814px;width:710px;height:1px;background:#e6e6e6"></div>
<div class="a" style="left:1780px;top:784px;width:43px;height:29px;border:1px solid #c0c0c0;background:#fff"></div>
<svg class="a" style="left:1786px;top:791px" width="18" height="14" viewBox="0 0 18 14"><path d="M0.5 0.5 L12 0.5 L15 3.5 L15 12.5 L0.5 12.5Z" fill="#fff" stroke="#bbb" stroke-width="1"/><text x="7" y="10.5" font-size="10" text-anchor="middle" fill="#aaa" font-family="Liberation Serif">A</text></svg>
<svg class="a" style="left:1810px;top:796px" width="9" height="6" viewBox="0 0 9 6"><path d="M0.5 0.5 L8 0.5 L4.25 5Z" fill="#333"/></svg>
<div class="t " style="left:1075.2px;top:822.99px;font-size:15.49px;color:#333;">Discontinued Medicati...</div>
<div class="t " style="left:1251px;top:819.01px;font-size:15.82px;color:#222;text-decoration:underline;text-underline-offset:1.5px;">Delsym 30 mg/5 mL reason: No longer required, Aspirin 81 mg reason: Pt...</div>
<div class="a" style="left:1070px;top:845px;width:710px;height:1px;background:#e6e6e6"></div>
<div class="a" style="left:1780px;top:815px;width:43px;height:29px;border:1px solid #c0c0c0;background:#fff"></div>
<svg class="a" style="left:1786px;top:822px" width="18" height="14" viewBox="0 0 18 14"><path d="M0.5 0.5 L12 0.5 L15 3.5 L15 12.5 L0.5 12.5Z" fill="#fff" stroke="#bbb" stroke-width="1"/><text x="7" y="10.5" font-size="10" text-anchor="middle" fill="#aaa" font-family="Liberation Serif">A</text></svg>
<svg class="a" style="left:1810px;top:827px" width="9" height="6" viewBox="0 0 9 6"><path d="M0.5 0.5 L8 0.5 L4.25 5Z" fill="#333"/></svg>
<div class="a" style="left:1825px;top:628px;width:17px;height:214px;background:#f0f0f0"></div>
<div class="a" style="left:1826px;top:630px;width:13px;height:12px;border:1px solid #b8b8b8;background:#fff"></div>
<svg class="a" style="left:1829.0px;top:634.0px" width="9" height="6" viewBox="0 0 9 6"><path d="M0.8 5 L8.2 5 L4.5 0.8Z" fill="#333"/></svg>
<div class="a" style="left:1826px;top:646px;width:13px;height:168px;border:1px solid #b5b5b5;background:#fafafa"></div>
<div class="a" style="left:1826px;top:822px;width:13px;height:13px;border:1px solid #b8b8b8;background:#fff"></div>
<svg class="a" style="left:1829.0px;top:826.5px" width="9" height="6" viewBox="0 0 9 6"><path d="M0.8 0.8 L8.2 0.8 L4.5 5Z" fill="#333"/></svg>
</div>
<div class="t" style="left:1867px;top:76.5px;font-size:13.2px;color:#444;transform:rotate(90deg);transform-origin:0 0;">Smart Box</div>
<div class="t" style="left:1867px;top:152.3px;font-size:13.55px;color:#222;transform:rotate(90deg);transform-origin:0 0;">Clinical Alerts</div>
<div class="t" style="left:1867px;top:248px;font-size:13.4px;color:#444;transform:rotate(90deg);transform-origin:0 0;">Tele Medicine</div>
</body></html>
